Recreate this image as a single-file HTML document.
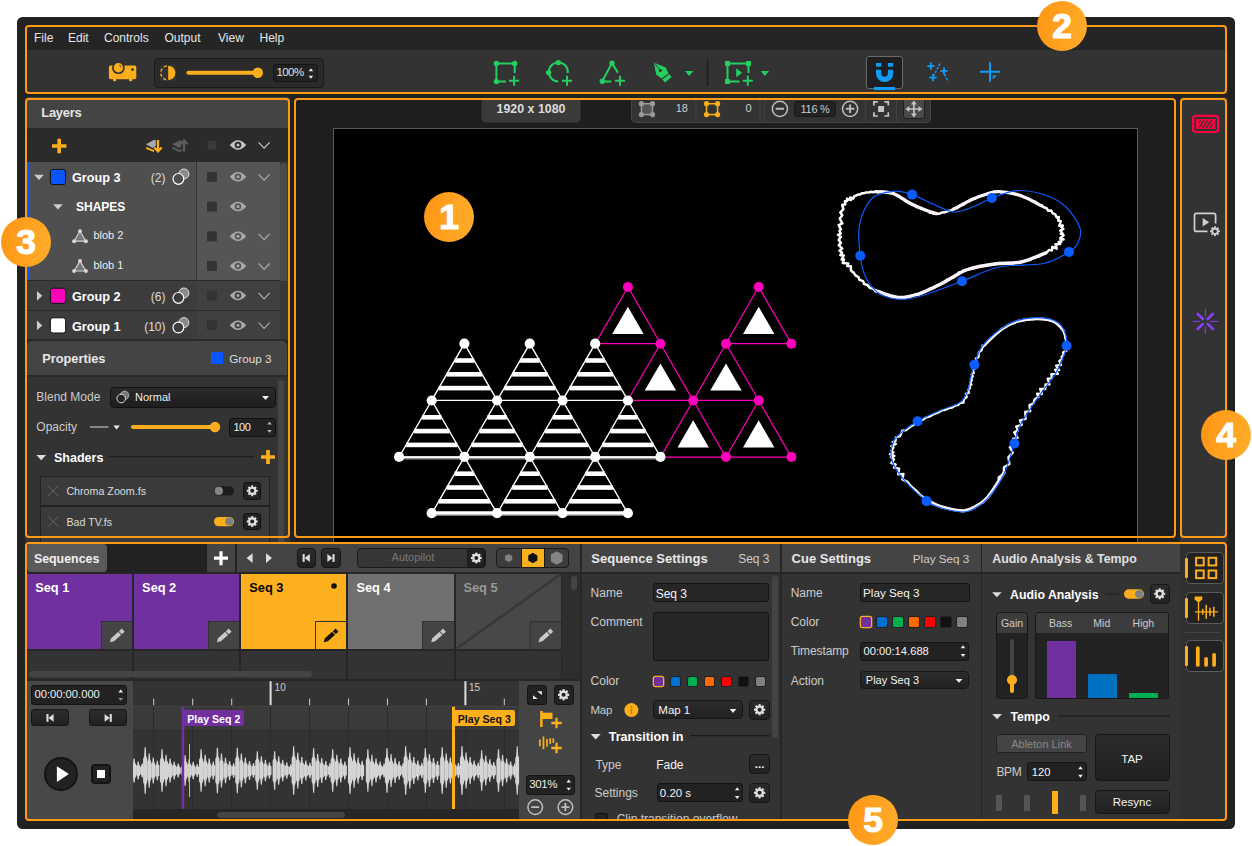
<!DOCTYPE html>
<html><head><meta charset="utf-8"><title>UI</title>
<style>
*{box-sizing:border-box;margin:0;padding:0}
html,body{width:1252px;height:846px;background:#fff;overflow:hidden}
body{position:relative;font-family:"Liberation Sans",sans-serif;font-size:12px;color:#ddd}
.a{position:absolute}
.win{left:17px;top:17px;width:1218px;height:811.6px;background:#222;border-radius:5.5px}
.ob{border:2.1px solid #fa9a16;border-radius:4px}
.badge{width:50px;height:50px;border-radius:50%;background:linear-gradient(100deg,#ff9614,#ffad2c);color:#fff;font-weight:bold;font-size:35.5px;text-align:center;line-height:50.5px;-webkit-text-stroke:1.1px #fff}
.t{white-space:nowrap;line-height:1}
.clip{overflow:hidden}
svg{overflow:visible;pointer-events:none}
</style></head><body>
<div class="a win"></div>
<div class="a clip" style="left:25px;top:25px;width:1203px;height:69px;border-radius:5px">
<div class="a" style="left:0;top:0;width:1203px;height:25px;background:#252525"></div>
<div class="a" style="left:0;top:25px;width:1203px;height:44px;background:#333"></div>
</div>
<div class="a t" style="top:32.14px;font-size:12px;color:#e6e6e6;left:34px;">File</div>
<div class="a t" style="top:32.14px;font-size:12px;color:#e6e6e6;left:68px;">Edit</div>
<div class="a t" style="top:32.14px;font-size:12px;color:#e6e6e6;left:104px;">Controls</div>
<div class="a t" style="top:32.14px;font-size:12px;color:#e6e6e6;left:164.5px;">Output</div>
<div class="a t" style="top:32.14px;font-size:12px;color:#e6e6e6;left:218px;">View</div>
<div class="a t" style="top:32.14px;font-size:12px;color:#e6e6e6;left:259.5px;">Help</div>
<div class="a " style="left:154px;top:58px;width:170px;height:30px;background:#2b2b2b;border:1px solid #1a1a1a;border-radius:4px;"></div>
<div class="a " style="left:160px;top:65px;width:16px;height:16px;background:#333;border-radius:2px;"></div>
<div class="a " style="left:273px;top:64px;width:45px;height:18px;background:#222;border:1px solid #151515;border-radius:3px;"></div>
<div class="a t" style="top:67.07px;font-size:11.5px;color:#e0e0e0;letter-spacing:-0.6px;left:276.5px;">100%</div>
<div class="a " style="left:866px;top:56px;width:37px;height:33px;background:#1f1f1f;border:1px solid #6a6a6a;border-radius:3px;"></div>
<div class="a " style="left:874px;top:87px;width:21px;height:3px;background:#129cf6;"></div>
<svg class="a" style="left:0;top:0" width="1252" height="846" viewBox="0 0 1252 846"><g fill="#fcae1b"><rect x="108.9" y="65.5" width="27.4" height="13.8" rx="1.8"/><rect x="113.1" y="78.5" width="3" height="2.6"/><rect x="129.1" y="78.5" width="3" height="2.6"/><circle cx="118.4" cy="67.7" r="6.4" fill="#333"/><circle cx="118.4" cy="67.7" r="4.7"/><path d="M119.7 65.2L121 66.8" stroke="#333" stroke-width="0.9" stroke-linecap="round"/><circle cx="132.5" cy="69.6" r="1.4" fill="#333"/></g><path d="M168.2 65.7A7.2 7.2 0 0 1 168.2 80.1Z" fill="#fcae1b"/><path d="M166.8 65.8A7.2 7.2 0 0 0 166.8 80" fill="none" stroke="#fcae1b" stroke-width="1.3" stroke-dasharray="3.2 2.1"/><rect x="186.4" y="70.8" width="75" height="4" rx="2" fill="#fcae1b"/><circle cx="257.8" cy="72.8" r="5.2" fill="#fcae1b"/><path d="M308.6 71.2L310.9 68.2L313.2 71.2ZM308.6 75.8L310.9 78.8L313.2 75.8Z" fill="#e8e8e8"/><g stroke="#24cf60" stroke-width="2" fill="none"><path d="M514.7 73V63.4H496.4V81.6H506"/></g><g fill="#24cf60"><circle cx="496.4" cy="63.4" r="2.7"/><circle cx="514.7" cy="63.4" r="2.7"/><circle cx="496.4" cy="81.6" r="2.7"/></g><path d="M509.1 80.7H519.1M514.1 75.7V85.7" stroke="#24cf60" stroke-width="2" fill="none"/><path d="M567.8 73A9.5 9.5 0 1 0 558.3 81.4" stroke="#24cf60" stroke-width="2" fill="none"/><circle cx="558.3" cy="62.6" r="2.7" fill="#24cf60"/><circle cx="548.6" cy="72.6" r="2.7" fill="#24cf60"/><path d="M562 80.7H572M567 75.7V85.7" stroke="#24cf60" stroke-width="2" fill="none"/><path d="M618 72.7L612 63.1L602.1 81.4H611.3" stroke="#24cf60" stroke-width="2" fill="none"/><circle cx="612" cy="63.1" r="2.7" fill="#24cf60"/><circle cx="602.3" cy="81.3" r="2.7" fill="#24cf60"/><path d="M615 80.7H625M620 75.7V85.7" stroke="#24cf60" stroke-width="2" fill="none"/><path d="M653.8 62.4L665.6 67.4L668.6 73.4L661.4 78.6L656.2 74.4Z" fill="#24cf60"/><path d="M662.3 79.3L669.3 74.3L671.6 77L665 82.4Z" fill="#24cf60"/><circle cx="660.4" cy="70.6" r="1.5" fill="#333"/><path d="M654.5 63L660 70" stroke="#333" stroke-width="0.9"/><path d="M685 71H693.4L689.2 76Z" fill="#24cf60"/><rect x="706.8" y="60" width="1.5" height="26" fill="#1c1c1c"/><path d="M748.5 73V63.5H727.5V81.5H739.5" stroke="#24cf60" stroke-width="2" fill="none"/><g fill="#24cf60"><rect x="725" y="61" width="5" height="5"/><rect x="746" y="61" width="5" height="5"/><rect x="725" y="79" width="5" height="5"/><path d="M736.2 68.2L742.2 72.7L736.2 77.2Z"/></g><path d="M742.8 80.7H752.8M747.8 75.7V85.7" stroke="#24cf60" stroke-width="2" fill="none"/><path d="M760.7 71H769L764.85 76Z" fill="#24cf60"/><path d="M878.6 69.7V73.3A6 6 0 0 0 890.6 73.3V69.7" stroke="#129cf6" stroke-width="5.3" fill="none"/><rect x="876" y="63" width="5.3" height="3.7" fill="#129cf6"/><rect x="887.9" y="63" width="5.3" height="3.7" fill="#129cf6"/><path d="M927.3 66.1H934.5M930.9 62.49999999999999V69.69999999999999" stroke="#129cf6" stroke-width="1.8" fill="none"/><path d="M940.4 70.8H947.6M944 67.2V74.39999999999999" stroke="#129cf6" stroke-width="1.8" fill="none"/><path d="M929.4 77.7H936.6M933 74.10000000000001V81.3" stroke="#129cf6" stroke-width="1.8" fill="none"/><path d="M940 63.6L933.6 76" stroke="#129cf6" stroke-width="1.4" stroke-dasharray="2.5 1.5"/><path d="M942.8 70.5L948 81.7" stroke="#129cf6" stroke-width="1.4" stroke-dasharray="2.5 1.5"/><path d="M990 62.2V81.7M980 71.8H1000" stroke="#129cf6" stroke-width="2"/><path d="M992.7 75.4H997L992.7 79.3Z" fill="#129cf6"/></svg>
<div class="a clip" style="left:25px;top:96.5px;width:265px;height:445.5px;border-radius:4px 4px 0 0;background:#2a2a2a">
<div class="a" style="left:0px;top:0.0px;width:265px;height:31.5px;background:#444;"></div>
<div class="a" style="left:0px;top:33.5px;width:265px;height:31.5px;background:#2b2b2b;"></div>
<div class="a" style="left:2px;top:65.0px;width:169.5px;height:118.5px;background:#4f4f4f;"></div>
<div class="a" style="left:172px;top:65.0px;width:82.5px;height:118.5px;background:#555;"></div>
<div class="a" style="left:2px;top:65.0px;width:2px;height:118.5px;background:#0a5cff;"></div>
<div class="a" style="left:171px;top:65.0px;width:1px;height:177.3px;background:#333;"></div>
<div class="a" style="left:2px;top:184.8px;width:169.5px;height:28.4px;background:#3c3c3c;"></div>
<div class="a" style="left:172px;top:184.8px;width:82.5px;height:28.4px;background:#404040;"></div>
<div class="a" style="left:2px;top:214.5px;width:169.5px;height:27.8px;background:#3c3c3c;"></div>
<div class="a" style="left:172px;top:214.5px;width:82.5px;height:27.8px;background:#404040;"></div>
<div class="a" style="left:254.5px;top:65.0px;width:8px;height:177px;background:#383838;"></div>
<div class="a" style="left:254.5px;top:66.5px;width:7.5px;height:118px;background:#4a4a4a;border-radius:3px 3px 0 0;"></div>
<div class="a" style="left:2px;top:244.5px;width:259.5px;height:34px;background:#444;border-radius:5px 5px 0 0;"></div>
<div class="a" style="left:0px;top:280.0px;width:265px;height:166px;background:#333;"></div>
<div class="a" style="left:253.3px;top:283.5px;width:6px;height:166px;background:#454545;border-radius:3px;"></div>
<div class="a" style="left:85px;top:290.5px;width:166px;height:20.5px;background:linear-gradient(#2a2a2a,#1e1e1e);border:1px solid #111;border-radius:4px;"></div>
<div class="a" style="left:204px;top:321.0px;width:47px;height:19.5px;background:#222;border:1px solid #111;border-radius:3px;"></div>
<div class="a" style="left:15px;top:379.0px;width:229.5px;height:30.5px;background:#3a3a3a;border:1px solid #212121;"></div>
<div class="a" style="left:15px;top:409.0px;width:229.5px;height:31px;background:#3a3a3a;border:1px solid #212121;"></div>
<div class="a" style="left:15px;top:440.0px;width:229.5px;height:10px;background:#3a3a3a;border:1px solid #212121;"></div>
<div class="a" style="left:218px;top:385.5px;width:18px;height:17.8px;background:#222;border:1px solid #111;border-radius:3px;"></div>
<div class="a" style="left:218px;top:416.0px;width:18px;height:17.8px;background:#222;border:1px solid #111;border-radius:3px;"></div>
</div>
<div class="a t" style="top:106.20px;font-size:13px;color:#e4e4e4;font-weight:bold;letter-spacing:-0.3px;left:41.3px;">Layers</div>
<div class="a t" style="top:171.95px;font-size:12.7px;color:#fff;font-weight:bold;left:72px;">Group 3</div>
<div class="a t" style="top:172.14px;font-size:12px;color:#ddd;left:-134.5px;width:300px;text-align:right;">(2)</div>
<div class="a t" style="top:201.34px;font-size:12px;color:#fff;font-weight:bold;left:76px;">SHAPES</div>
<div class="a t" style="top:230.49px;font-size:11px;color:#eee;left:93.4px;">blob 2</div>
<div class="a t" style="top:260.29px;font-size:11px;color:#eee;left:93.4px;">blob 1</div>
<div class="a t" style="top:290.85px;font-size:12.7px;color:#fff;font-weight:bold;left:72px;">Group 2</div>
<div class="a t" style="top:291.04px;font-size:12px;color:#ddd;left:-134.5px;width:300px;text-align:right;">(6)</div>
<div class="a t" style="top:320.55px;font-size:12.7px;color:#fff;font-weight:bold;left:72px;">Group 1</div>
<div class="a t" style="top:320.84px;font-size:12px;color:#ddd;left:-134.5px;width:300px;text-align:right;">(10)</div>
<div class="a t" style="top:352.66px;font-size:12.8px;color:#e8e8e8;font-weight:bold;left:42.2px;">Properties</div>
<div class="a t" style="top:352.80px;font-size:11.7px;color:#ddd;left:229.2px;">Group 3</div>
<div class="a t" style="top:391.14px;font-size:12px;color:#ccc;left:36.3px;">Blend Mode</div>
<div class="a t" style="top:392.19px;font-size:11px;color:#eee;left:135px;">Normal</div>
<div class="a t" style="top:421.24px;font-size:12px;color:#ccc;left:36.3px;">Opacity</div>
<div class="a t" style="top:421.89px;font-size:11px;color:#eee;letter-spacing:-0.5px;left:233.5px;">100</div>
<div class="a t" style="top:452.02px;font-size:12.5px;color:#fff;font-weight:bold;left:54px;">Shaders</div>
<div class="a t" style="top:486.14px;font-size:10.7px;color:#ddd;left:66.4px;">Chroma Zoom.fs</div>
<div class="a t" style="top:517.14px;font-size:10.7px;color:#ddd;left:66.4px;">Bad TV.fs</div>
<svg class="a" style="left:0;top:0" width="1252" height="846" viewBox="0 0 1252 846"><path d="M52 146H66.4M59.2 138.8V153.2" stroke="#fcae1b" stroke-width="3.6"/><path d="M146 144.3L153.9 140H155.8V145.7L152.7 147.9Z" fill="#aaa"/><path d="M146.2 147.8L154 151.1" stroke="#fcae1b" stroke-width="2"/><path d="M158 140V151M154.3 147.5L158 151.4L161.7 147.5" stroke="#fcae1b" stroke-width="2.3" fill="none"/><path d="M172.1 144.3L179.8 140.2H181V146.9L179.3 147.9Z" fill="#5c5c5c"/><path d="M172.3 147.5L179.3 151L181.8 149.7" stroke="#5c5c5c" stroke-width="1.8" fill="none"/><path d="M184 151.7V141M180.4 144.2L184 140.4L187.6 144.2" stroke="#5c5c5c" stroke-width="2.3" fill="none"/><rect x="207.7" y="141" width="8.5" height="8.5" fill="#3a3a3a"/><path d="M229.8 145Q238 135.4 246.2 145Q238 154.6 229.8 145Z" fill="#c6c6c6"/><circle cx="238" cy="145" r="3.3" fill="#2b2b2b"/><circle cx="238" cy="145" r="1.5" fill="#c6c6c6"/><path d="M258.6 142.29999999999998L264.1 148.1L269.6 142.29999999999998" stroke="#c6c6c6" stroke-width="1.2" fill="none"/><rect x="207" y="171.9" width="9.9" height="9.9" fill="#333"/><path d="M229.8 176.8Q238 167.20000000000002 246.2 176.8Q238 186.4 229.8 176.8Z" fill="#aaa"/><circle cx="238" cy="176.8" r="3.3" fill="#555"/><circle cx="238" cy="176.8" r="1.5" fill="#aaa"/><path d="M258.6 174.3L264.1 180.10000000000002L269.6 174.3" stroke="#aaa" stroke-width="1.2" fill="none"/><rect x="207" y="201.6" width="9.9" height="9.9" fill="#333"/><path d="M229.8 206.5Q238 196.9 246.2 206.5Q238 216.1 229.8 206.5Z" fill="#aaa"/><circle cx="238" cy="206.5" r="3.3" fill="#555"/><circle cx="238" cy="206.5" r="1.5" fill="#aaa"/><rect x="207" y="231.4" width="9.9" height="9.9" fill="#333"/><path d="M229.8 236.3Q238 226.70000000000002 246.2 236.3Q238 245.9 229.8 236.3Z" fill="#aaa"/><circle cx="238" cy="236.3" r="3.3" fill="#555"/><circle cx="238" cy="236.3" r="1.5" fill="#aaa"/><path d="M258.6 233.8L264.1 239.60000000000002L269.6 233.8" stroke="#aaa" stroke-width="1.2" fill="none"/><rect x="207" y="261.1" width="9.9" height="9.9" fill="#333"/><path d="M229.8 266Q238 256.4 246.2 266Q238 275.6 229.8 266Z" fill="#aaa"/><circle cx="238" cy="266" r="3.3" fill="#555"/><circle cx="238" cy="266" r="1.5" fill="#aaa"/><path d="M258.6 263.5L264.1 269.29999999999995L269.6 263.5" stroke="#aaa" stroke-width="1.2" fill="none"/><rect x="207" y="290.6" width="9.9" height="9.9" fill="#333"/><path d="M229.8 295.5Q238 285.9 246.2 295.5Q238 305.1 229.8 295.5Z" fill="#aaa"/><circle cx="238" cy="295.5" r="3.3" fill="#404040"/><circle cx="238" cy="295.5" r="1.5" fill="#aaa"/><path d="M258.6 293.0L264.1 298.79999999999995L269.6 293.0" stroke="#aaa" stroke-width="1.2" fill="none"/><rect x="207" y="320.3" width="9.9" height="9.9" fill="#333"/><path d="M229.8 325.2Q238 315.59999999999997 246.2 325.2Q238 334.8 229.8 325.2Z" fill="#aaa"/><circle cx="238" cy="325.2" r="3.3" fill="#404040"/><circle cx="238" cy="325.2" r="1.5" fill="#aaa"/><path d="M258.6 322.7L264.1 328.49999999999994L269.6 322.7" stroke="#aaa" stroke-width="1.2" fill="none"/><path d="M34.1 174.8H43.9L39 180.0Z" fill="#ccc"/><rect x="50.4" y="169.4" width="15.2" height="15.2" rx="2.5" fill="#0a55ff" stroke="#111" stroke-width="1"/><circle cx="183.9" cy="174.0" r="5" fill="#8a8a8a" stroke="#ddd" stroke-width="1"/><circle cx="178.4" cy="178.9" r="5.4" fill="#4f4f4f" stroke="#fff" stroke-width="1.2"/><path d="M53.1 204.3H62.9L58 209.5Z" fill="#ccc"/><path d="M80 231.3L74.1 241.20000000000002H85.9Z" fill="#777" stroke="#d0d0d0" stroke-width="1.2"/><g fill="#d8d8d8"><circle cx="80" cy="231.3" r="2"/><circle cx="74.1" cy="241.20000000000002" r="2"/><circle cx="85.9" cy="241.20000000000002" r="2"/></g><path d="M80 261.1L74.1 271.0H85.9Z" fill="#777" stroke="#d0d0d0" stroke-width="1.2"/><g fill="#d8d8d8"><circle cx="80" cy="261.1" r="2"/><circle cx="74.1" cy="271.0" r="2"/><circle cx="85.9" cy="271.0" r="2"/></g><path d="M36.95 290.90000000000003V300.7L42.25 295.8Z" fill="#ccc"/><rect x="50.4" y="288.2" width="15.2" height="15.2" rx="2.5" fill="#ff00bb" stroke="#111" stroke-width="1"/><circle cx="183.9" cy="293.0" r="5" fill="#8a8a8a" stroke="#ddd" stroke-width="1"/><circle cx="178.4" cy="297.90000000000003" r="5.4" fill="#3c3c3c" stroke="#fff" stroke-width="1.2"/><path d="M36.95 320.5V330.29999999999995L42.25 325.4Z" fill="#ccc"/><rect x="50.4" y="317.8" width="15.2" height="15.2" rx="2.5" fill="#ffffff" stroke="#111" stroke-width="1"/><circle cx="183.9" cy="322.59999999999997" r="5" fill="#8a8a8a" stroke="#ddd" stroke-width="1"/><circle cx="178.4" cy="327.5" r="5.4" fill="#3c3c3c" stroke="#fff" stroke-width="1.2"/><rect x="211" y="352.2" width="12" height="11.8" fill="#0a55ff"/><circle cx="124.6" cy="395.3" r="4.2" fill="#777" stroke="#bbb" stroke-width="0.8"/><circle cx="121.2" cy="398.5" r="4.3" fill="#262626" stroke="#ddd" stroke-width="1"/><path d="M261.9 395.9H269.1L265.5 400.1Z" fill="#eee"/><path d="M90 427H108.5" stroke="#ddd" stroke-width="1"/><path d="M113.39999999999999 425.6H119.8L116.6 429.4Z" fill="#eee"/><rect x="131" y="425" width="88" height="4" rx="2" fill="#fcae1b"/><circle cx="215" cy="427" r="5.2" fill="#fcae1b"/><path d="M267.2 424.6L269.5 421.8L271.8 424.6ZM267.2 430L269.5 432.8L271.8 430Z" fill="#bbb"/><path d="M36.300000000000004 455.0H46.1L41.2 460.20000000000005Z" fill="#ddd"/><path d="M109 456.7H254" stroke="#1e1e1e" stroke-width="1.2"/><path d="M261 457H275M268 450V464" stroke="#fcae1b" stroke-width="3.7"/><path d="M48 485.6L58.4 496.0M58.4 485.6L48 496.0" stroke="#666" stroke-width="1"/><g transform="translate(252.2 490.8)"><circle r="3.06" fill="none" stroke="#e0e0e0" stroke-width="2.14"/><rect x="-1.07" y="-5.40" width="2.14" height="2.04" fill="#e0e0e0" transform="rotate(0)"/><rect x="-1.07" y="-5.40" width="2.14" height="2.04" fill="#e0e0e0" transform="rotate(45)"/><rect x="-1.07" y="-5.40" width="2.14" height="2.04" fill="#e0e0e0" transform="rotate(90)"/><rect x="-1.07" y="-5.40" width="2.14" height="2.04" fill="#e0e0e0" transform="rotate(135)"/><rect x="-1.07" y="-5.40" width="2.14" height="2.04" fill="#e0e0e0" transform="rotate(180)"/><rect x="-1.07" y="-5.40" width="2.14" height="2.04" fill="#e0e0e0" transform="rotate(225)"/><rect x="-1.07" y="-5.40" width="2.14" height="2.04" fill="#e0e0e0" transform="rotate(270)"/><rect x="-1.07" y="-5.40" width="2.14" height="2.04" fill="#e0e0e0" transform="rotate(315)"/></g><path d="M48 516.3L58.4 526.7M58.4 516.3L48 526.7" stroke="#666" stroke-width="1"/><g transform="translate(252.2 521.5)"><circle r="3.06" fill="none" stroke="#e0e0e0" stroke-width="2.14"/><rect x="-1.07" y="-5.40" width="2.14" height="2.04" fill="#e0e0e0" transform="rotate(0)"/><rect x="-1.07" y="-5.40" width="2.14" height="2.04" fill="#e0e0e0" transform="rotate(45)"/><rect x="-1.07" y="-5.40" width="2.14" height="2.04" fill="#e0e0e0" transform="rotate(90)"/><rect x="-1.07" y="-5.40" width="2.14" height="2.04" fill="#e0e0e0" transform="rotate(135)"/><rect x="-1.07" y="-5.40" width="2.14" height="2.04" fill="#e0e0e0" transform="rotate(180)"/><rect x="-1.07" y="-5.40" width="2.14" height="2.04" fill="#e0e0e0" transform="rotate(225)"/><rect x="-1.07" y="-5.40" width="2.14" height="2.04" fill="#e0e0e0" transform="rotate(270)"/><rect x="-1.07" y="-5.40" width="2.14" height="2.04" fill="#e0e0e0" transform="rotate(315)"/></g><rect x="214" y="486.2" width="20" height="9.4" rx="4.7" fill="#1c1c1c"/><circle cx="218.8" cy="490.9" r="4.1" fill="#858585"/><rect x="214" y="516.9" width="20" height="9.4" rx="4.7" fill="#fcae1b"/><circle cx="229.2" cy="521.6" r="4.1" fill="#808080"/></svg>
<div class="a clip" style="left:294px;top:98px;width:883px;height:444px;border-radius:4px 4px 0 0;background:#1e1e1e">
<div class="a" style="left:38.5px;top:29.5px;width:805px;height:430px;background:#000;border:1.2px solid #5a5a5a"></div>
<div class="a" style="left:187px;top:0;width:100px;height:24.5px;background:#3a3a3a;border:1px solid #2c2c2c;border-top:none;border-radius:0 0 5px 5px"></div>
<div class="a" style="left:337px;top:0;width:299.5px;height:24.5px;background:#333;border:1px solid #444;border-top:none;border-radius:0 0 5px 5px"></div>
<div class="a" style="left:500.2px;top:2.7px;width:41.5px;height:16.8px;background:#222;border:1px solid #1a1a1a;border-radius:3px"></div>
<div class="a" style="left:609.2px;top:0;width:21.4px;height:21.4px;background:#4a4a4a;border:1px solid #1e1e1e;border-radius:0 0 3px 3px"></div>
</div>
<div class="a t" style="top:103.30px;font-size:12.4px;color:#ddd;font-weight:bold;left:381px;width:300px;text-align:center;">1920 x 1080</div>
<div class="a t" style="top:103.29px;font-size:11px;color:#ccc;left:388px;width:300px;text-align:right;">18</div>
<div class="a t" style="top:103.29px;font-size:11px;color:#ccc;left:451.70000000000005px;width:300px;text-align:right;">0</div>
<div class="a t" style="top:103.99px;font-size:11px;color:#ccc;letter-spacing:-0.3px;left:665px;width:300px;text-align:center;">116 %</div>
<svg class="a" style="left:0;top:0" width="1252" height="846" viewBox="0 0 1252 846"><defs><clipPath id="cv"><rect x="296" y="100" width="879" height="442"/></clipPath></defs><g clip-path="url(#cv)"><path d="M464.4 343.7L431.7 400.4H497.1Z" fill="none" stroke="#fff" stroke-width="1.4"/><rect x="454.7" y="358.2" width="19.4" height="4.6" fill="#fff"/><rect x="446.8" y="372.0" width="35.3" height="4.6" fill="#fff"/><rect x="438.8" y="385.8" width="51.2" height="4.6" fill="#fff"/><path d="M529.8 343.7L497.1 400.4H562.5Z" fill="none" stroke="#fff" stroke-width="1.4"/><rect x="520.1" y="358.2" width="19.4" height="4.6" fill="#fff"/><rect x="512.2" y="372.0" width="35.3" height="4.6" fill="#fff"/><rect x="504.2" y="385.8" width="51.2" height="4.6" fill="#fff"/><path d="M595.2 343.7L562.5 400.4H627.9Z" fill="none" stroke="#fff" stroke-width="1.4"/><rect x="585.5" y="358.2" width="19.4" height="4.6" fill="#fff"/><rect x="577.6" y="372.0" width="35.3" height="4.6" fill="#fff"/><rect x="569.6" y="385.8" width="51.2" height="4.6" fill="#fff"/><path d="M431.7 400.5L399.0 457.2H464.4Z" fill="none" stroke="#fff" stroke-width="1.4"/><rect x="422.0" y="415.0" width="19.4" height="4.6" fill="#fff"/><rect x="414.1" y="428.8" width="35.3" height="4.6" fill="#fff"/><rect x="406.1" y="442.6" width="51.2" height="4.6" fill="#fff"/><path d="M497.1 400.5L464.4 457.2H529.8Z" fill="none" stroke="#fff" stroke-width="1.4"/><rect x="487.4" y="415.0" width="19.4" height="4.6" fill="#fff"/><rect x="479.5" y="428.8" width="35.3" height="4.6" fill="#fff"/><rect x="471.5" y="442.6" width="51.2" height="4.6" fill="#fff"/><path d="M562.5 400.5L529.8 457.2H595.2Z" fill="none" stroke="#fff" stroke-width="1.4"/><rect x="552.8" y="415.0" width="19.4" height="4.6" fill="#fff"/><rect x="544.9" y="428.8" width="35.3" height="4.6" fill="#fff"/><rect x="536.9" y="442.6" width="51.2" height="4.6" fill="#fff"/><path d="M627.9 400.5L595.2 457.2H660.6Z" fill="none" stroke="#fff" stroke-width="1.4"/><rect x="618.2" y="415.0" width="19.4" height="4.6" fill="#fff"/><rect x="610.3" y="428.8" width="35.3" height="4.6" fill="#fff"/><rect x="602.3" y="442.6" width="51.2" height="4.6" fill="#fff"/><path d="M464.4 456.9L431.7 513.6H497.1Z" fill="none" stroke="#fff" stroke-width="1.4"/><rect x="454.7" y="471.4" width="19.4" height="4.6" fill="#fff"/><rect x="446.8" y="485.2" width="35.3" height="4.6" fill="#fff"/><rect x="438.8" y="499.0" width="51.2" height="4.6" fill="#fff"/><path d="M529.8 456.9L497.1 513.6H562.5Z" fill="none" stroke="#fff" stroke-width="1.4"/><rect x="520.1" y="471.4" width="19.4" height="4.6" fill="#fff"/><rect x="512.2" y="485.2" width="35.3" height="4.6" fill="#fff"/><rect x="504.2" y="499.0" width="51.2" height="4.6" fill="#fff"/><path d="M595.2 456.9L562.5 513.6H627.9Z" fill="none" stroke="#fff" stroke-width="1.4"/><rect x="585.5" y="471.4" width="19.4" height="4.6" fill="#fff"/><rect x="577.6" y="485.2" width="35.3" height="4.6" fill="#fff"/><rect x="569.6" y="499.0" width="51.2" height="4.6" fill="#fff"/><path d="M399.1 457.4H660.4" stroke="#fff" stroke-width="2.4"/><path d="M399.1 459H660.4" stroke="#999" stroke-width="1"/><path d="M431.7 513H627.9" stroke="#fff" stroke-width="3.4"/><path d="M431.7 515.2H627.9" stroke="#aaa" stroke-width="1"/><path d="M627.9 287L595.2 343.7H660.6Z" fill="none" stroke="#ff00bb" stroke-width="1.2"/><path d="M627.9 306.7L612.2 333.9H643.6Z" fill="#fff"/><path d="M758.7 287L726.0 343.7H791.4Z" fill="none" stroke="#ff00bb" stroke-width="1.2"/><path d="M758.7 306.7L743.0 333.9H774.4Z" fill="#fff"/><path d="M660.4 343.7L627.7 400.4H693.1Z" fill="none" stroke="#ff00bb" stroke-width="1.2"/><path d="M660.4 363.4L644.7 390.6H676.1Z" fill="#fff"/><path d="M726 343.7L693.3 400.4H758.7Z" fill="none" stroke="#ff00bb" stroke-width="1.2"/><path d="M726 363.4L710.3 390.6H741.7Z" fill="#fff"/><path d="M693.2 400.5L660.5 457.2H725.9Z" fill="none" stroke="#ff00bb" stroke-width="1.2"/><path d="M693.2 420.2L677.5 447.4H708.9Z" fill="#fff"/><path d="M758.7 400.5L726.0 457.2H791.4Z" fill="none" stroke="#ff00bb" stroke-width="1.2"/><path d="M758.7 420.2L743.0 447.4H774.4Z" fill="#fff"/><circle cx="627.9" cy="287" r="5" fill="#ff00bb"/><circle cx="758.7" cy="287" r="5" fill="#ff00bb"/><circle cx="660.4" cy="343.7" r="5" fill="#ff00bb"/><circle cx="726" cy="343.7" r="5" fill="#ff00bb"/><circle cx="791.4" cy="343.7" r="5" fill="#ff00bb"/><circle cx="693.2" cy="400.5" r="5" fill="#ff00bb"/><circle cx="758.7" cy="400.5" r="5" fill="#ff00bb"/><circle cx="726" cy="456.9" r="5" fill="#ff00bb"/><circle cx="791.4" cy="456.9" r="5" fill="#ff00bb"/><circle cx="464.4" cy="343.7" r="5.1" fill="#fff"/><circle cx="529.8" cy="343.7" r="5.1" fill="#fff"/><circle cx="595.2" cy="343.7" r="5.1" fill="#fff"/><circle cx="431.7" cy="400.5" r="5.1" fill="#fff"/><circle cx="497.1" cy="400.5" r="5.1" fill="#fff"/><circle cx="562.5" cy="400.5" r="5.1" fill="#fff"/><circle cx="627.9" cy="400.5" r="5.1" fill="#fff"/><circle cx="399.1" cy="456.9" r="5.1" fill="#fff"/><circle cx="464.4" cy="456.9" r="5.1" fill="#fff"/><circle cx="529.8" cy="456.9" r="5.1" fill="#fff"/><circle cx="595.2" cy="456.9" r="5.1" fill="#fff"/><circle cx="660.4" cy="456.9" r="5.1" fill="#fff"/><circle cx="431.7" cy="513.2" r="5.1" fill="#fff"/><circle cx="497.1" cy="513.2" r="5.1" fill="#fff"/><circle cx="562.5" cy="513.2" r="5.1" fill="#fff"/><circle cx="627.9" cy="513.2" r="5.1" fill="#fff"/><path d="M875.8 191.5L878.5 192.1L881.4 191.4L884.3 192.0L887.2 192.1L890.0 192.8L893.2 193.3L895.6 194.7L899.0 196.0L901.2 198.2L904.3 199.2L906.6 201.8L909.4 202.8L912.1 204.5L914.7 205.4L916.8 206.9L919.3 207.3L921.6 208.6L924.1 209.2L926.1 210.6L928.1 211.1L929.9 212.7L932.0 212.8L934.1 213.8L936.2 213.2L938.8 213.9L941.8 212.6L944.8 212.3L947.9 211.1L951.1 210.5L953.8 208.6L957.2 208.0L959.9 205.8L963.6 204.6L966.1 202.3L969.3 201.0L972.1 199.1L974.8 198.7L977.3 197.0L979.9 196.4L982.1 195.4L984.9 194.7L986.9 193.9L989.3 193.5L990.8 192.7L992.8 192.5L994.5 191.4L996.4 191.9L999.2 191.5L1001.9 192.4L1005.5 192.2L1009.4 193.1L1013.4 193.3L1017.2 194.7L1021.1 195.5L1024.5 197.5L1028.4 198.4L1031.4 200.7L1035.6 201.9L1038.4 204.6L1041.6 205.6L1044.2 207.5L1046.4 208.0L1048.2 210.7L1051.2 210.5L1052.5 213.2L1055.2 214.4L1056.7 217.5L1058.9 217.1L1058.2 220.6L1060.8 221.2L1059.3 225.8L1062.8 225.6L1061.4 227.2L1063.3 229.0L1060.3 230.6L1062.7 233.7L1060.8 233.7L1063.6 235.3L1060.3 238.1L1063.6 239.5L1060.6 239.5L1061.3 241.9L1058.6 242.0L1060.1 244.1L1055.5 244.3L1056.7 248.7L1052.3 246.8L1052.0 250.5L1049.2 249.9L1046.1 252.8L1042.4 254.3L1038.8 256.6L1034.0 257.5L1030.1 259.9L1025.5 260.7L1021.2 262.1L1016.5 262.4L1012.3 263.5L1007.7 262.9L1003.4 263.5L998.8 263.1L994.6 264.4L989.7 264.6L985.0 265.7L980.3 265.9L975.5 267.7L971.4 268.0L967.8 269.6L964.1 270.3L961.7 272.1L958.8 272.5L957.4 274.8L955.4 275.4L953.3 277.8L950.4 277.9L949.1 279.8L947.2 279.6L945.8 281.7L943.2 282.4L941.0 284.3L937.2 285.5L934.2 287.7L929.6 288.8L925.9 291.6L921.9 292.2L918.9 294.4L915.1 294.6L911.4 296.2L908.3 296.5L905.1 298.0L901.7 297.2L898.0 298.0L894.6 296.8L890.9 296.5L887.1 294.4L882.7 294.2L879.7 291.5L875.7 291.3L873.0 288.7L869.8 287.9L867.4 285.0L864.1 284.0L863.1 281.1L859.4 279.8L858.5 277.1L855.4 275.3L853.7 272.8L850.9 270.5L850.9 266.3L847.2 266.1L848.3 263.4L842.7 263.1L844.0 259.4L841.6 259.5L843.9 255.5L840.3 255.3L842.1 252.8L839.5 250.6L842.3 248.6L838.8 245.1L840.9 242.8L838.7 240.0L840.9 236.8L838.0 234.8L840.7 233.7L839.5 230.6L840.9 229.4L838.7 225.2L842.3 223.4L839.7 218.5L842.3 215.3L840.3 212.6L843.4 209.1L842.2 204.9L845.3 204.3L844.9 201.3L847.2 201.0L847.0 198.8L851.1 200.0L850.2 197.5L853.3 198.6L854.4 196.1L856.2 195.5L858.0 194.5L860.0 194.5L861.8 193.3L863.9 193.3L866.1 192.4L868.7 192.6L871.0 191.8L873.3 192.2Z" fill="none" stroke="#fff" stroke-width="2.5" stroke-linejoin="round"/><path d="M876.0 191.7C878.8 192.0 887.4 191.6 893.0 193.5C898.6 195.4 904.3 200.3 909.5 203.0C914.7 205.7 919.5 207.7 924.0 209.5C928.5 211.3 934.2 212.9 936.3 213.6" fill="none" stroke="#fbf3fb" stroke-width="3.4" stroke-linecap="round"/><path d="M954.0 209.0C957.0 207.4 966.5 202.0 972.0 199.5C977.5 197.0 982.5 195.3 987.0 194.0C991.5 192.7 993.3 191.4 999.0 191.7C1004.7 192.0 1013.9 193.3 1021.0 195.7C1028.1 198.0 1038.1 204.1 1041.5 205.8" fill="none" stroke="#fbf3fb" stroke-width="3.2" stroke-linecap="round"/><path d="M1046.0 252.8C1041.8 254.3 1029.6 260.1 1021.0 262.0C1012.4 263.9 1003.4 262.8 994.5 264.0C985.6 265.2 974.5 267.3 967.6 269.5C960.7 271.7 957.5 274.6 953.0 277.0C948.5 279.4 946.6 281.2 940.8 284.0C935.0 286.8 925.5 291.8 918.4 294.0C911.3 296.2 905.4 298.0 898.3 297.5C891.2 297.0 879.7 291.9 876.0 290.8" fill="none" stroke="#fbf3fb" stroke-width="3.4" stroke-linecap="round"/><path d="M860.3 255.7C859.2 246.9 857.5 234.5 859.5 225.0C861.5 215.5 866.3 204.1 872.0 198.5C877.7 192.9 887.1 192.0 893.8 191.3C900.5 190.7 905.6 192.5 912.1 194.6C918.6 196.7 926.0 201.1 933.0 204.0C940.0 206.9 947.2 211.7 954.2 212.0C961.2 212.3 968.7 208.3 975.0 206.0C981.3 203.7 984.8 200.6 991.8 198.0C998.8 195.4 1007.9 191.1 1016.8 190.6C1025.7 190.1 1036.8 192.3 1045.0 195.0C1053.2 197.7 1060.2 201.5 1066.0 207.0C1071.8 212.5 1078.0 222.0 1080.0 228.0C1082.0 234.0 1079.8 239.0 1078.0 243.0C1076.2 247.0 1074.7 248.5 1069.0 251.9C1063.3 255.3 1055.4 261.0 1043.7 263.5C1032.0 266.0 1012.6 264.1 999.0 267.0C985.4 269.9 973.9 276.7 962.0 281.2C950.1 285.7 937.3 291.0 927.4 294.0C917.5 297.0 910.7 299.3 902.8 299.3C894.9 299.3 886.1 297.6 880.0 294.0C873.9 290.4 869.3 284.4 866.0 278.0C862.7 271.6 861.4 264.5 860.3 255.7Z" fill="none" stroke="#0a5cff" stroke-width="1.2"/><circle cx="912.1" cy="194.6" r="5" fill="#0a5cff"/><circle cx="991.8" cy="198" r="5" fill="#0a5cff"/><circle cx="1069" cy="251.9" r="5" fill="#0a5cff"/><circle cx="962" cy="281.2" r="5" fill="#0a5cff"/><circle cx="860.3" cy="255.7" r="5" fill="#0a5cff"/><path d="M1036.7 318.2L1039.9 318.9L1042.8 318.7L1045.9 319.6L1048.8 319.6L1051.2 320.8L1053.7 321.1L1055.5 322.4L1057.7 323.6L1059.1 325.1L1061.0 326.7L1061.8 328.7L1063.3 330.2L1063.9 332.6L1064.9 335.0L1065.2 337.9L1066.1 340.4L1065.6 343.3L1065.9 345.6L1065.3 347.9L1066.4 350.8L1063.1 352.4L1063.7 354.8L1061.6 356.9L1062.0 359.1L1059.3 361.0L1061.1 364.9L1056.1 365.6L1059.1 370.1L1055.1 369.7L1057.8 373.9L1051.4 374.2L1051.8 378.4L1047.6 378.6L1049.5 384.3L1045.5 384.5L1045.3 389.0L1040.1 388.9L1041.9 394.0L1037.0 393.7L1038.5 397.1L1034.7 399.2L1033.5 403.7L1029.4 405.2L1030.2 411.1L1025.2 411.8L1025.6 419.0L1019.9 420.3L1021.8 424.8L1016.2 426.5L1017.9 430.5L1014.2 432.3L1017.6 437.8L1013.1 438.8L1015.0 444.0L1009.8 447.2L1012.8 452.6L1008.3 457.4L1009.5 464.0L1003.9 467.3L1003.9 473.5L998.7 477.4L998.4 482.8L995.0 486.8L992.7 491.1L989.3 494.4L987.2 498.2L984.7 500.2L982.7 502.6L980.5 503.5L978.5 505.2L976.5 506.0L974.6 507.3L972.6 507.9L971.2 509.6L969.1 509.7L967.6 510.8L965.9 510.7L963.3 511.2L960.4 510.7L956.7 510.6L952.7 509.6L948.7 509.0L945.3 507.7L941.5 507.5L939.2 506.0L936.6 505.8L934.6 504.4L932.3 504.0L930.2 502.3L927.0 500.4L923.6 497.4L919.6 494.3L915.7 490.1L911.0 486.2L907.6 481.9L902.3 479.4L903.5 474.0L898.1 474.4L899.2 468.6L893.9 467.6L895.7 464.4L891.3 463.2L894.0 459.3L890.9 457.2L894.4 455.9L889.9 454.2L893.5 452.5L891.4 450.6L893.5 447.5L891.3 446.2L895.9 443.9L892.6 442.0L895.6 440.9L895.8 437.4L900.0 436.1L902.3 430.7L906.6 430.0L910.2 426.8L914.3 424.6L917.9 421.9L922.0 420.3L925.9 417.5L930.1 416.3L934.0 414.0L938.2 412.6L941.8 410.4L945.3 409.9L948.8 408.2L952.2 407.6L954.8 405.9L958.3 404.9L960.4 402.8L963.5 402.6L963.8 399.4L966.7 397.2L965.8 393.8L969.0 392.6L968.1 390.0L970.0 388.0L969.7 385.5L971.4 384.6L970.2 382.5L972.0 380.1L970.9 378.7L972.8 376.3L971.6 374.3L973.8 372.9L973.0 369.7L975.8 367.8L974.0 364.6L976.6 362.7L975.9 358.5L978.6 356.9L978.8 352.3L981.6 350.4L982.5 345.6L985.5 344.5L988.4 340.4L992.0 337.7L995.2 334.0L998.8 331.9L1001.5 328.9L1004.7 327.7L1007.3 325.5L1010.1 324.4L1012.2 323.0L1015.1 322.3L1017.9 320.9L1020.8 320.6L1024.2 319.6L1027.0 319.4L1030.4 318.8L1033.8 319.1Z" fill="none" stroke="#fff" stroke-width="2.3" stroke-linejoin="round"/><path d="M982.3 347.4C985.5 344.4 995.4 334.0 1001.3 329.7C1007.2 325.4 1011.7 323.4 1017.6 321.6C1023.5 319.8 1030.6 318.9 1036.7 318.9C1042.8 318.9 1049.5 319.6 1054.0 321.7C1058.5 323.8 1062.3 329.6 1064.0 331.2" fill="none" stroke="#fbf3fb" stroke-width="2.6" stroke-linecap="round"/><path d="M1004.0 472.8C1001.3 476.9 992.5 491.5 987.7 497.2C982.9 502.9 979.1 504.5 975.0 506.8C970.9 509.1 968.9 510.8 963.3 510.8C957.7 510.8 947.6 508.6 941.5 506.8C935.4 505.0 929.1 501.1 926.6 499.9" fill="none" stroke="#fbf3fb" stroke-width="3.2" stroke-linecap="round"/><path d="M1036.7 317.7C1042.8 317.7 1049.5 318.4 1054.0 320.5C1058.5 322.6 1061.9 325.8 1064.0 330.0C1066.1 334.2 1066.9 340.7 1066.6 345.7C1066.3 350.7 1063.8 355.4 1062.0 360.0C1060.2 364.6 1058.5 368.7 1055.7 373.4C1052.9 378.1 1048.6 383.0 1045.0 388.0C1041.4 393.0 1038.1 397.1 1034.0 403.3C1029.9 409.5 1023.7 418.3 1020.4 425.0C1017.1 431.7 1017.1 435.3 1014.4 443.5C1011.7 451.7 1008.5 464.9 1004.0 474.0C999.5 483.1 992.5 492.7 987.7 498.4C982.9 504.1 979.1 505.7 975.0 508.0C970.9 510.3 968.9 512.0 963.3 512.0C957.7 512.0 947.6 509.8 941.5 508.0C935.4 506.2 932.9 505.9 926.6 501.1C920.3 496.3 909.2 485.9 903.5 479.4C897.8 472.9 894.5 466.9 892.5 462.0C890.5 457.1 890.6 454.2 891.3 450.0C892.0 445.8 892.1 441.8 896.5 437.0C900.9 432.2 910.1 425.7 917.6 421.2C925.1 416.7 934.4 413.1 941.5 410.0C948.6 406.9 955.6 405.8 960.0 402.5C964.4 399.2 966.2 394.1 968.0 390.0C969.8 385.9 969.4 382.2 970.5 378.0C971.6 373.8 972.4 370.0 974.4 364.7C976.4 359.4 977.8 352.2 982.3 346.2C986.8 340.2 995.4 332.8 1001.3 328.5C1007.2 324.2 1011.7 322.2 1017.6 320.4C1023.5 318.6 1030.6 317.7 1036.7 317.7Z" fill="none" stroke="#0a5cff" stroke-width="1.2"/><circle cx="1066.6" cy="345.7" r="5" fill="#0a5cff"/><circle cx="974.4" cy="364.7" r="5" fill="#0a5cff"/><circle cx="917.6" cy="421.2" r="5" fill="#0a5cff"/><circle cx="1014.4" cy="443.5" r="5" fill="#0a5cff"/><circle cx="926.6" cy="501.1" r="5" fill="#0a5cff"/></g></svg>
<svg class="a" style="left:0;top:0" width="1252" height="846" viewBox="0 0 1252 846"><rect x="641.4" y="103.7" width="11.100000000000023" height="10.899999999999991" fill="#555" stroke="#9a9a9a" stroke-width="1.5"/><circle cx="641.4" cy="103.7" r="2.6" fill="#9a9a9a"/><circle cx="641.4" cy="114.6" r="2.6" fill="#9a9a9a"/><circle cx="652.5" cy="103.7" r="2.6" fill="#9a9a9a"/><circle cx="652.5" cy="114.6" r="2.6" fill="#9a9a9a"/><rect x="706.5" y="103.7" width="11.100000000000023" height="10.899999999999991" fill="none" stroke="#fcae1b" stroke-width="1.5"/><circle cx="706.5" cy="103.7" r="2.6" fill="#fcae1b"/><circle cx="706.5" cy="114.6" r="2.6" fill="#fcae1b"/><circle cx="717.6" cy="103.7" r="2.6" fill="#fcae1b"/><circle cx="717.6" cy="114.6" r="2.6" fill="#fcae1b"/><path d="M696 100V122M760 100V122M764.3 100V122M865.4 100V122M896.4 100V122" stroke="#444" stroke-width="1"/><g stroke="#bbb" fill="none" stroke-width="1.5"><circle cx="779.9" cy="108.8" r="7.6"/><circle cx="850.1" cy="108.8" r="7.6"/></g><path d="M775.7 108.8H784.1M845.9 108.8H854.3M850.1 104.6V113" stroke="#bbb" stroke-width="1.9"/><path d="M873.9 105.5V101.8H877.8M884.4 101.8H888.3V105.5M888.3 112.3V116H884.4M877.8 116H873.9V112.3" stroke="#c4c4c4" stroke-width="1.7" fill="none"/><rect x="878.1" y="106" width="6" height="6" fill="#c4c4c4"/><path d="M907.5 109H920.3M913.9 102.6V115.4" stroke="#c4c4c4" stroke-width="1.7" fill="none"/><path d="M913.9 100.6L917 104.4H910.8ZM913.9 117.4L917 113.6H910.8ZM905.5 109L909.3 105.9V112.1ZM922.3 109L918.5 105.9V112.1Z" fill="#c4c4c4"/></svg>
<div class="a" style="left:1180px;top:97px;width:48px;height:445px;border-radius:4px 4px 0 0;background:#333"></div>
<svg class="a" style="left:0;top:0" width="1252" height="846" viewBox="0 0 1252 846"><rect x="1193.1" y="115.9" width="25" height="16.1" rx="2.5" fill="none" stroke="#ff0040" stroke-width="2.2"/><rect x="1196" y="119" width="19.4" height="9.9" fill="#ff0040"/><path d="M1199.1 127.3L1203.8 120.6" stroke="#333" stroke-width="1.2" stroke-linecap="round"/><path d="M1202.9 127.3L1207.6000000000001 120.6" stroke="#333" stroke-width="1.2" stroke-linecap="round"/><path d="M1206.4 127.3L1211.1000000000001 120.6" stroke="#333" stroke-width="1.2" stroke-linecap="round"/><path d="M1198.8 122.8L1200.5 120.6M1210.2 127.3L1212.4 124.6" stroke="#333" stroke-width="1.2" stroke-linecap="round"/><path d="M1207.5 231.4H1196.5A2 2 0 0 1 1194.5 229.4V215.4A2 2 0 0 1 1196.5 213.4H1213.6A2 2 0 0 1 1215.6 215.4V223.5" fill="none" stroke="#d0d0d0" stroke-width="1.7"/><path d="M1202.7 218L1209.2 222.3L1202.7 226.6Z" fill="#d0d0d0"/><g transform="translate(1215 231.2)"><circle r="2.77" fill="none" stroke="#d0d0d0" stroke-width="1.94"/><rect x="-0.97" y="-4.90" width="1.94" height="1.85" fill="#d0d0d0" transform="rotate(0)"/><rect x="-0.97" y="-4.90" width="1.94" height="1.85" fill="#d0d0d0" transform="rotate(45)"/><rect x="-0.97" y="-4.90" width="1.94" height="1.85" fill="#d0d0d0" transform="rotate(90)"/><rect x="-0.97" y="-4.90" width="1.94" height="1.85" fill="#d0d0d0" transform="rotate(135)"/><rect x="-0.97" y="-4.90" width="1.94" height="1.85" fill="#d0d0d0" transform="rotate(180)"/><rect x="-0.97" y="-4.90" width="1.94" height="1.85" fill="#d0d0d0" transform="rotate(225)"/><rect x="-0.97" y="-4.90" width="1.94" height="1.85" fill="#d0d0d0" transform="rotate(270)"/><rect x="-0.97" y="-4.90" width="1.94" height="1.85" fill="#d0d0d0" transform="rotate(315)"/></g><path d="M1205.3 308.9V316.4M1205.3 326.4V333.9M1192.8 321.4H1200.3M1210.3 321.4H1217.8" stroke="#8a3ffc" stroke-width="1"/><path d="M1207.7 323.79999999999995L1212.8999999999999 329.0" stroke="#8a3ffc" stroke-width="2.6" stroke-linecap="round"/><path d="M1207.7 319.0L1212.8999999999999 313.79999999999995" stroke="#8a3ffc" stroke-width="2.6" stroke-linecap="round"/><path d="M1202.8999999999999 323.79999999999995L1197.7 329.0" stroke="#8a3ffc" stroke-width="2.6" stroke-linecap="round"/><path d="M1202.8999999999999 319.0L1197.7 313.79999999999995" stroke="#8a3ffc" stroke-width="2.6" stroke-linecap="round"/></svg>
<div class="a clip" style="left:25px;top:542px;width:1203px;height:279px;border-radius:5px;background:#262626">
<div class="a" style="left:2.0px;top:2.0px;width:553.0px;height:28.3px;background:#222;"></div>
<div class="a" style="left:2.0px;top:2.0px;width:80.2px;height:27.5px;background:#5a5a5a;border-radius:4px;"></div>
<div class="a" style="left:181.8px;top:2.0px;width:28.6px;height:28.3px;background:#444;"></div>
<div class="a" style="left:212.0px;top:2.0px;width:343.0px;height:28.3px;background:#444;"></div>
<div class="a" style="left:271.5px;top:6.0px;width:19.3px;height:19.7px;background:;background:linear-gradient(#2c2c2c,#212121);border:1px solid #161616;border-radius:4px;"></div>
<div class="a" style="left:296.3px;top:6.0px;width:19.4px;height:19.7px;background:;background:linear-gradient(#2c2c2c,#212121);border:1px solid #161616;border-radius:4px;"></div>
<div class="a" style="left:331.5px;top:6.0px;width:129.0px;height:19.7px;background:#363636;border:1px solid #1a1a1a;border-radius:4px;"></div>
<div class="a" style="left:442.2px;top:6.0px;width:18.3px;height:19.7px;background:#222;border:1px solid #161616;border-radius:4px;"></div>
<div class="a" style="left:471.3px;top:6.0px;width:72.8px;height:19.7px;background:#3c3c3c;border:1px solid #1a1a1a;border-radius:4px;"></div>
<div class="a" style="left:495.8px;top:6.8px;width:24.2px;height:18.1px;background:#fdb01e;border-left:1px solid #1a1a1a;border-right:1px solid #1a1a1a;"></div>
<div class="a" style="left:2.2px;top:32.0px;width:105.3px;height:75.0px;background:#7030a0;"></div>
<div class="a" style="left:2.2px;top:109.0px;width:105.3px;height:27.5px;background:#333;"></div>
<div class="a" style="left:76.2px;top:79.3px;width:31.3px;height:27.7px;background:#444;border-left:1px solid #333;border-top:1px solid #333;"></div>
<div class="a" style="left:109.1px;top:32.0px;width:105.3px;height:75.0px;background:#7030a0;"></div>
<div class="a" style="left:109.1px;top:109.0px;width:105.3px;height:27.5px;background:#333;"></div>
<div class="a" style="left:183.1px;top:79.3px;width:31.3px;height:27.7px;background:#444;border-left:1px solid #333;border-top:1px solid #333;"></div>
<div class="a" style="left:216.0px;top:32.0px;width:105.3px;height:75.0px;background:#fdb01e;"></div>
<div class="a" style="left:216.0px;top:109.0px;width:105.3px;height:27.5px;background:#333;"></div>
<div class="a" style="left:290.0px;top:79.3px;width:31.3px;height:27.7px;background:#fdb01e;border-left:1px solid #333;border-top:1px solid #333;"></div>
<div class="a" style="left:323.4px;top:32.0px;width:105.3px;height:75.0px;background:#707070;"></div>
<div class="a" style="left:323.4px;top:109.0px;width:105.3px;height:27.5px;background:#333;"></div>
<div class="a" style="left:397.4px;top:79.3px;width:31.3px;height:27.7px;background:#444;border-left:1px solid #333;border-top:1px solid #333;"></div>
<div class="a" style="left:430.7px;top:32.0px;width:105.3px;height:75.0px;background:#484848;"></div>
<div class="a" style="left:430.7px;top:109.0px;width:105.3px;height:27.5px;background:#333;"></div>
<div class="a" style="left:504.7px;top:79.3px;width:31.3px;height:27.7px;background:#444;border-left:1px solid #333;border-top:1px solid #333;"></div>
<div class="a" style="left:537.0px;top:32.0px;width:17.5px;height:104.5px;background:#2e2e2e;"></div>
<div class="a" style="left:545.5px;top:34.0px;width:6.5px;height:13.5px;background:#444;border-radius:3px;"></div>
<div class="a" style="left:4.0px;top:129.0px;width:283.0px;height:5.6px;background:#444;border-radius:3px;"></div>
<div class="a" style="left:2.0px;top:139.0px;width:106.0px;height:140.0px;background:#484848;"></div>
<div class="a" style="left:108.0px;top:139.0px;width:386.4px;height:24.5px;background:#333;"></div>
<div class="a" style="left:108.0px;top:163.5px;width:386.4px;height:1.5px;background:#444;"></div>
<div class="a" style="left:108.0px;top:165.0px;width:386.4px;height:23.0px;background:#3a3a3a;"></div>
<div class="a" style="left:108.0px;top:188.0px;width:386.4px;height:1.0px;background:#2c2c2c;"></div>
<div class="a" style="left:108.0px;top:189.0px;width:386.4px;height:77.7px;background:#333;"></div>
<div class="a" style="left:108.0px;top:266.7px;width:386.4px;height:12.0px;background:#262626;"></div>
<div class="a" style="left:192.0px;top:270.0px;width:127.7px;height:5.6px;background:#444;border-radius:3px;"></div>
<div class="a" style="left:494.4px;top:139.0px;width:60.6px;height:140.0px;background:#444;"></div>
<div class="a" style="left:6.2px;top:143.2px;width:95.7px;height:19.5px;background:#222;border:1px solid #141414;border-radius:3px;"></div>
<div class="a" style="left:6.2px;top:167.4px;width:37.6px;height:17.0px;background:;background:linear-gradient(#2c2c2c,#212121);border:1px solid #161616;border-radius:3px;"></div>
<div class="a" style="left:64.4px;top:167.4px;width:37.5px;height:17.0px;background:;background:linear-gradient(#2c2c2c,#212121);border:1px solid #161616;border-radius:3px;"></div>
<div class="a" style="left:19.1px;top:215.2px;width:33.6px;height:33.6px;background:#222;border:2px solid #141414;border-radius:50%;"></div>
<div class="a" style="left:66.1px;top:222.4px;width:19.9px;height:19.2px;background:#222;border:2px solid #141414;border-radius:4px;"></div>
<div class="a" style="left:71.8px;top:227.6px;width:8.7px;height:8.9px;background:#fff;"></div>
<div class="a" style="left:502.3px;top:142.9px;width:19.9px;height:19.9px;background:#222;border:1px solid #141414;border-radius:3px;"></div>
<div class="a" style="left:528.7px;top:142.9px;width:19.9px;height:19.9px;background:#222;border:1px solid #141414;border-radius:3px;"></div>
<div class="a" style="left:500.6px;top:233.4px;width:49.6px;height:19.2px;background:#222;border:1px solid #141414;border-radius:3px;"></div>
<div class="a" style="left:128.2px;top:165.0px;width:1.0px;height:101.7px;background:#2b2b2b;"></div>
<div class="a" style="left:167.2px;top:165.0px;width:1.0px;height:101.7px;background:#2b2b2b;"></div>
<div class="a" style="left:206.2px;top:165.0px;width:1.0px;height:101.7px;background:#2b2b2b;"></div>
<div class="a" style="left:245.1px;top:165.0px;width:1.0px;height:101.7px;background:#2b2b2b;"></div>
<div class="a" style="left:284.1px;top:165.0px;width:1.0px;height:101.7px;background:#2b2b2b;"></div>
<div class="a" style="left:323.0px;top:165.0px;width:1.0px;height:101.7px;background:#2b2b2b;"></div>
<div class="a" style="left:362.0px;top:165.0px;width:1.0px;height:101.7px;background:#2b2b2b;"></div>
<div class="a" style="left:400.9px;top:165.0px;width:1.0px;height:101.7px;background:#2b2b2b;"></div>
<div class="a" style="left:439.9px;top:165.0px;width:1.0px;height:101.7px;background:#2b2b2b;"></div>
<div class="a" style="left:478.8px;top:165.0px;width:1.0px;height:101.7px;background:#2b2b2b;"></div>
<div class="a" style="left:156.6px;top:165.0px;width:2.6px;height:101.7px;background:#7030a0;"></div>
<div class="a" style="left:156.6px;top:167.8px;width:62.8px;height:16.2px;background:#7030a0;border-radius:0 2px 2px 0;"></div>
<div class="a" style="left:427.4px;top:164.7px;width:2.6px;height:102.0px;background:#fdb01e;"></div>
<div class="a" style="left:427.4px;top:167.6px;width:62.4px;height:16.6px;background:#fdb01e;border-radius:0 2px 2px 0;"></div>
<div class="a" style="left:556.7px;top:2.0px;width:198.3px;height:28.0px;background:#444;"></div>
<div class="a" style="left:556.7px;top:31.5px;width:198.3px;height:248.0px;background:#333;"></div>
<div class="a" style="left:747.3px;top:34.3px;width:5.3px;height:161.3px;background:#444;border-radius:3px;"></div>
<div class="a" style="left:627.7px;top:41.2px;width:116.8px;height:19.2px;background:#262626;border:1px solid #141414;border-radius:3px;"></div>
<div class="a" style="left:627.7px;top:70.2px;width:116.8px;height:49.3px;background:#262626;border:1px solid #141414;border-radius:3px;"></div>
<div class="a" style="left:628.7px;top:134.6px;width:9.5px;height:9.3px;background:#7030a0;border-radius:1.5px;box-shadow:0 0 0 1.3px #fdb01e;"></div>
<div class="a" style="left:645.7px;top:134.6px;width:9.5px;height:9.3px;background:#0070d0;border-radius:1.5px;box-shadow:0 0 0 1.1px #222;"></div>
<div class="a" style="left:662.8px;top:134.6px;width:9.5px;height:9.3px;background:#00b050;border-radius:1.5px;box-shadow:0 0 0 1.1px #222;"></div>
<div class="a" style="left:679.8px;top:134.6px;width:9.5px;height:9.3px;background:#ff6a00;border-radius:1.5px;box-shadow:0 0 0 1.1px #222;"></div>
<div class="a" style="left:696.8px;top:134.6px;width:9.5px;height:9.3px;background:#ff0000;border-radius:1.5px;box-shadow:0 0 0 1.1px #222;"></div>
<div class="a" style="left:713.9px;top:134.6px;width:9.5px;height:9.3px;background:#111;border-radius:1.5px;box-shadow:0 0 0 1.1px #222;"></div>
<div class="a" style="left:730.9px;top:134.6px;width:9.5px;height:9.3px;background:#808080;border-radius:1.5px;box-shadow:0 0 0 1.1px #222;"></div>
<div class="a" style="left:627.7px;top:158.0px;width:90.7px;height:19.4px;background:;background:linear-gradient(#2c2c2c,#212121);border:1px solid #161616;border-radius:4px;"></div>
<div class="a" style="left:724.4px;top:158.0px;width:20.4px;height:19.8px;background:;background:linear-gradient(#2c2c2c,#212121);border:1px solid #161616;border-radius:4px;"></div>
<div class="a" style="left:724.4px;top:212.3px;width:20.4px;height:19.6px;background:;background:linear-gradient(#2c2c2c,#212121);border:1px solid #161616;border-radius:4px;"></div>
<div class="a" style="left:631.6px;top:241.4px;width:86.8px;height:18.9px;background:#222;border:1px solid #141414;border-radius:3px;"></div>
<div class="a" style="left:724.4px;top:241.2px;width:20.4px;height:19.4px;background:;background:linear-gradient(#2c2c2c,#212121);border:1px solid #161616;border-radius:4px;"></div>
<div class="a" style="left:569.5px;top:271.2px;width:13.8px;height:13.0px;background:#222;border:1px solid #141414;border-radius:2px;"></div>
<div class="a" style="left:757.0px;top:2.0px;width:198.8px;height:28.0px;background:#444;"></div>
<div class="a" style="left:757.0px;top:31.5px;width:198.8px;height:248.0px;background:#333;"></div>
<div class="a" style="left:835.1px;top:41.4px;width:110.3px;height:19.0px;background:#262626;border:1px solid #141414;border-radius:3px;"></div>
<div class="a" style="left:836.3px;top:75.3px;width:9.4px;height:9.3px;background:#7030a0;border-radius:1.5px;box-shadow:0 0 0 1.3px #fdb01e;"></div>
<div class="a" style="left:852.3px;top:75.3px;width:9.4px;height:9.3px;background:#0070d0;border-radius:1.5px;box-shadow:0 0 0 1.1px #222;"></div>
<div class="a" style="left:868.3px;top:75.3px;width:9.4px;height:9.3px;background:#00b050;border-radius:1.5px;box-shadow:0 0 0 1.1px #222;"></div>
<div class="a" style="left:884.2px;top:75.3px;width:9.4px;height:9.3px;background:#ff6a00;border-radius:1.5px;box-shadow:0 0 0 1.1px #222;"></div>
<div class="a" style="left:900.2px;top:75.3px;width:9.4px;height:9.3px;background:#ff0000;border-radius:1.5px;box-shadow:0 0 0 1.1px #222;"></div>
<div class="a" style="left:916.2px;top:75.3px;width:9.4px;height:9.3px;background:#111;border-radius:1.5px;box-shadow:0 0 0 1.1px #222;"></div>
<div class="a" style="left:932.2px;top:75.3px;width:9.4px;height:9.3px;background:#808080;border-radius:1.5px;box-shadow:0 0 0 1.1px #222;"></div>
<div class="a" style="left:835.1px;top:99.5px;width:109.3px;height:19.0px;background:#222;border:1px solid #141414;border-radius:3px;"></div>
<div class="a" style="left:835.1px;top:128.8px;width:109.3px;height:18.6px;background:;background:linear-gradient(#2c2c2c,#212121);border:1px solid #161616;border-radius:4px;"></div>
<div class="a" style="left:957.4px;top:2.0px;width:198.0px;height:28.0px;background:#444;"></div>
<div class="a" style="left:957.4px;top:31.5px;width:198.0px;height:248.0px;background:#333;"></div>
<div class="a" style="left:1155.4px;top:2.0px;width:46.0px;height:278.0px;background:#303030;"></div>
<div class="a" style="left:1124.8px;top:42.2px;width:20.0px;height:19.4px;background:;background:linear-gradient(#2c2c2c,#212121);border:1px solid #161616;border-radius:4px;"></div>
<div class="a" style="left:971.3px;top:70.4px;width:31.4px;height:87.0px;background:#222;border:1px solid #181818;border-radius:3px;overflow:hidden;"></div>
<div class="a" style="left:972.3px;top:71.4px;width:29.4px;height:19.8px;background:#3c3c3c;border-radius:2px 2px 0 0;"></div>
<div class="a" style="left:1010.3px;top:70.4px;width:134.2px;height:87.0px;background:#222;border:1px solid #181818;border-radius:3px;"></div>
<div class="a" style="left:1011.3px;top:71.4px;width:132.2px;height:19.8px;background:#3c3c3c;border-radius:2px 2px 0 0;"></div>
<div class="a" style="left:1022.0px;top:98.8px;width:28.9px;height:57.6px;background:#7030a0;"></div>
<div class="a" style="left:1063.0px;top:131.8px;width:29.0px;height:24.6px;background:#0070c0;"></div>
<div class="a" style="left:1103.9px;top:150.7px;width:29.1px;height:5.7px;background:#00b050;"></div>
<div class="a" style="left:985.2px;top:96.9px;width:3.7px;height:54.5px;background:#444;border-radius:2px;"></div>
<div class="a" style="left:985.2px;top:138.0px;width:3.7px;height:13.4px;background:#fcae1b;border-radius:2px;"></div>
<div class="a" style="left:981.8px;top:132.7px;width:10.4px;height:10.4px;background:#fcae1b;border-radius:50%;"></div>
<div class="a" style="left:971.4px;top:192.4px;width:90.4px;height:19.0px;background:#444;border:1px solid #222;border-radius:3px;"></div>
<div class="a" style="left:1070.2px;top:192.4px;width:74.6px;height:47.0px;background:;background:linear-gradient(#2c2c2c,#212121);border:1px solid #161616;border-radius:4px;"></div>
<div class="a" style="left:1002.2px;top:220.2px;width:59.6px;height:19.2px;background:#222;border:1px solid #141414;border-radius:3px;"></div>
<div class="a" style="left:1070.2px;top:248.4px;width:74.6px;height:24.1px;background:;background:linear-gradient(#2c2c2c,#212121);border:1px solid #161616;border-radius:4px;"></div>
<div class="a" style="left:971.2px;top:253.0px;width:5.9px;height:15.7px;background:#555;"></div>
<div class="a" style="left:999.1px;top:253.0px;width:5.9px;height:15.7px;background:#555;"></div>
<div class="a" style="left:1055.0px;top:253.0px;width:5.9px;height:15.7px;background:#555;"></div>
<div class="a" style="left:1026.9px;top:248.8px;width:6.1px;height:23.0px;background:#fcae1b;"></div>
<div class="a" style="left:1160.8px;top:10.0px;width:38.1px;height:31.8px;background:#222;border:1px solid #5a5a5a;border-radius:4px;"></div>
<div class="a" style="left:1160.2px;top:15.6px;width:2.9px;height:20.4px;background:#fcae1b;border-radius:1px;"></div>
<div class="a" style="left:1160.8px;top:50.3px;width:38.1px;height:31.8px;background:#222;border:1px solid #5a5a5a;border-radius:4px;"></div>
<div class="a" style="left:1160.2px;top:55.9px;width:2.9px;height:20.4px;background:#fcae1b;border-radius:1px;"></div>
<div class="a" style="left:1160.8px;top:98.2px;width:38.1px;height:31.8px;background:#222;border:1px solid #5a5a5a;border-radius:4px;"></div>
<div class="a" style="left:1160.2px;top:103.8px;width:2.9px;height:20.4px;background:#fcae1b;border-radius:1px;"></div>
<div class="a" style="left:1160.0px;top:89.5px;width:35.7px;height:1.5px;background:#444;"></div>
</div>
<div class="a t" style="top:552.90px;font-size:12.4px;color:#f0f0f0;font-weight:bold;left:33.9px;">Sequences</div>
<div class="a t" style="top:552.49px;font-size:11px;color:#777;left:263px;width:300px;text-align:center;">Autopilot</div>
<div class="a t" style="top:581.66px;font-size:12.8px;color:#fff;font-weight:bold;left:35.2px;">Seq 1</div>
<div class="a t" style="top:581.66px;font-size:12.8px;color:#fff;font-weight:bold;left:142.1px;">Seq 2</div>
<div class="a t" style="top:581.66px;font-size:12.8px;color:#000;font-weight:bold;left:249.3px;">Seq 3</div>
<div class="a t" style="top:581.66px;font-size:12.8px;color:#fff;font-weight:bold;left:356.4px;">Seq 4</div>
<div class="a t" style="top:581.66px;font-size:12.8px;color:#999;font-weight:bold;left:463.4px;">Seq 5</div>
<div class="a t" style="top:689.12px;font-size:11.2px;color:#eee;left:34.5px;">00:00:00.000</div>
<div class="a t" style="top:682.83px;font-size:10px;color:#ccc;left:274.6px;">10</div>
<div class="a t" style="top:682.83px;font-size:10px;color:#ccc;left:468.9px;">15</div>
<div class="a t" style="top:713.73px;font-size:10.6px;color:#fff;font-weight:bold;left:187.3px;">Play Seq 2</div>
<div class="a t" style="top:713.83px;font-size:10.6px;color:#111;font-weight:bold;left:457.8px;">Play Seq 3</div>
<div class="a t" style="top:779.37px;font-size:11.5px;color:#eee;letter-spacing:-0.4px;left:529.2px;">301%</div>
<div class="a t" style="top:552.00px;font-size:13px;color:#e8e8e8;font-weight:bold;left:591.3px;">Sequence Settings</div>
<div class="a t" style="top:552.84px;font-size:12px;color:#ccc;left:469.5px;width:300px;text-align:right;">Seq 3</div>
<div class="a t" style="top:587.44px;font-size:12px;color:#ccc;left:590.6px;">Name</div>
<div class="a t" style="top:587.84px;font-size:12px;color:#f4f4f4;left:655.7px;">Seq 3</div>
<div class="a t" style="top:616.34px;font-size:12px;color:#ccc;left:590.6px;">Comment</div>
<div class="a t" style="top:675.24px;font-size:12px;color:#ccc;left:590.6px;">Color</div>
<div class="a t" style="top:705.27px;font-size:11.5px;color:#ccc;letter-spacing:-0.3px;left:590.6px;">Map</div>
<div class="a t" style="top:705.37px;font-size:11.5px;color:#f4f4f4;left:658.3px;">Map 1</div>
<div class="a t" style="top:730.93px;font-size:12.6px;color:#fff;font-weight:bold;left:608.7px;">Transition in</div>
<div class="a t" style="top:758.54px;font-size:12px;color:#ccc;left:595.4px;">Type</div>
<div class="a t" style="top:758.54px;font-size:12px;color:#f4f4f4;left:656.2px;">Fade</div>
<div class="a t" style="top:759.47px;font-size:11.5px;color:#f4f4f4;font-weight:bold;left:609.6px;width:300px;text-align:center;">...</div>
<div class="a t" style="top:787.24px;font-size:12px;color:#ccc;left:594.5px;">Settings</div>
<div class="a t" style="top:787.67px;font-size:11.5px;color:#f4f4f4;left:659.8px;">0.20 s</div>
<div class="a clip" style="left:610px;top:808px;width:165px;height:11px"><div class="a t" style="left:6.7px;top:5.3px;font-size:12px;color:#ccc">Clip transition overflow</div></div>
<div class="a t" style="top:551.80px;font-size:13px;color:#e8e8e8;font-weight:bold;left:791.6px;">Cue Settings</div>
<div class="a t" style="top:552.80px;font-size:11.7px;color:#ccc;left:669.3px;width:300px;text-align:right;">Play Seq 3</div>
<div class="a t" style="top:587.14px;font-size:12px;color:#ccc;left:790.7px;">Name</div>
<div class="a t" style="top:587.40px;font-size:11.7px;color:#f4f4f4;left:863px;">Play Seq 3</div>
<div class="a t" style="top:616.44px;font-size:12px;color:#ccc;left:790.7px;">Color</div>
<div class="a t" style="top:645.24px;font-size:12px;color:#ccc;letter-spacing:-0.1px;left:790.7px;">Timestamp</div>
<div class="a t" style="top:645.92px;font-size:11.2px;color:#f4f4f4;left:863.5px;">00:00:14.688</div>
<div class="a t" style="top:674.54px;font-size:12px;color:#ccc;left:790.7px;">Action</div>
<div class="a t" style="top:675.39px;font-size:11px;color:#f4f4f4;left:865.8px;">Play Seq 3</div>
<div class="a t" style="top:553.00px;font-size:12.4px;color:#e0e0e0;font-weight:bold;left:992.2px;">Audio Analysis &amp; Tempo</div>
<div class="a t" style="top:588.99px;font-size:12.3px;color:#fff;font-weight:bold;left:1010.1px;">Audio Analysis</div>
<div class="a t" style="top:618.11px;font-size:10.5px;color:#ccc;left:862px;width:300px;text-align:center;">Gain</div>
<div class="a t" style="top:618.11px;font-size:10.5px;color:#ccc;left:910.5999999999999px;width:300px;text-align:center;">Bass</div>
<div class="a t" style="top:618.11px;font-size:10.5px;color:#ccc;left:951.8px;width:300px;text-align:center;">Mid</div>
<div class="a t" style="top:618.11px;font-size:10.5px;color:#ccc;left:993.4000000000001px;width:300px;text-align:center;">High</div>
<div class="a t" style="top:711.39px;font-size:12.3px;color:#fff;font-weight:bold;left:1010.4px;">Tempo</div>
<div class="a t" style="top:738.89px;font-size:11px;color:#888;left:891.5px;width:300px;text-align:center;">Ableton Link</div>
<div class="a t" style="top:753.67px;font-size:11.5px;color:#f4f4f4;left:982px;width:300px;text-align:center;">TAP</div>
<div class="a t" style="top:766.24px;font-size:12px;color:#ccc;letter-spacing:-0.3px;left:996.4px;">BPM</div>
<div class="a t" style="top:766.72px;font-size:11.2px;color:#f4f4f4;left:1031.8px;">120</div>
<div class="a t" style="top:797.17px;font-size:11.5px;color:#f4f4f4;left:982px;width:300px;text-align:center;">Resync</div>
<svg class="a" style="left:0;top:0" width="1252" height="846" viewBox="0 0 1252 846"><defs><clipPath id="bt"><rect x="27" y="544" width="1199" height="275"/></clipPath></defs><g clip-path="url(#bt)"><path d="M214 558.2H228M221 551.2V565.2" stroke="#fff" stroke-width="3.2"/><path d="M252.6 553.2V563L246.6 558.1ZM266 553.2V563L272 558.1Z" fill="#ddd"/><rect x="302.59999999999997" y="554.1" width="2.1" height="7.8" fill="#ddd"/><path d="M309.8 554.1V561.9L304.59999999999997 558Z" fill="#ddd"/><rect x="332.5" y="554.1" width="2.1" height="7.8" fill="#ddd"/><path d="M327.4 554.1V561.9L332.6 558Z" fill="#ddd"/><g transform="translate(476.3 558)"><circle r="3.06" fill="none" stroke="#e0e0e0" stroke-width="2.14"/><rect x="-1.07" y="-5.40" width="2.14" height="2.04" fill="#e0e0e0" transform="rotate(0)"/><rect x="-1.07" y="-5.40" width="2.14" height="2.04" fill="#e0e0e0" transform="rotate(45)"/><rect x="-1.07" y="-5.40" width="2.14" height="2.04" fill="#e0e0e0" transform="rotate(90)"/><rect x="-1.07" y="-5.40" width="2.14" height="2.04" fill="#e0e0e0" transform="rotate(135)"/><rect x="-1.07" y="-5.40" width="2.14" height="2.04" fill="#e0e0e0" transform="rotate(180)"/><rect x="-1.07" y="-5.40" width="2.14" height="2.04" fill="#e0e0e0" transform="rotate(225)"/><rect x="-1.07" y="-5.40" width="2.14" height="2.04" fill="#e0e0e0" transform="rotate(270)"/><rect x="-1.07" y="-5.40" width="2.14" height="2.04" fill="#e0e0e0" transform="rotate(315)"/></g><polygon points="508.6,553.9 512.2,556.0 512.2,560.0 508.6,562.1 505.0,560.0 505.0,556.0" fill="#808080"/><polygon points="532.8,552.7 537.4,555.4 537.4,560.6 532.8,563.3 528.2,560.6 528.2,555.4" fill="#111"/><polygon points="556.7,551.3 562.5,554.6 562.5,561.4 556.7,564.7 550.9,561.4 550.9,554.6" fill="#858585"/><path d="M456 649L561 574" stroke="#383838" stroke-width="2.6"/><rect x="529.7" y="621.3" width="31.3" height="27.7" fill="#333"/><rect x="530.7" y="622.3" width="30.3" height="26.7" fill="#444"/><circle cx="334" cy="586" r="2.8" fill="#111"/><g transform="translate(109.9 642.2) rotate(-42)" fill="#c8c8c8"><path d="M0 0L3.6 -2.1H13.2V2.1H3.6Z"/><rect x="14.1" y="-2.1" width="3.9" height="4.2"/></g><g transform="translate(216.8 642.2) rotate(-42)" fill="#c8c8c8"><path d="M0 0L3.6 -2.1H13.2V2.1H3.6Z"/><rect x="14.1" y="-2.1" width="3.9" height="4.2"/></g><g transform="translate(323.7 642.2) rotate(-42)" fill="#111"><path d="M0 0L3.6 -2.1H13.2V2.1H3.6Z"/><rect x="14.1" y="-2.1" width="3.9" height="4.2"/></g><g transform="translate(431.09999999999997 642.2) rotate(-42)" fill="#c8c8c8"><path d="M0 0L3.6 -2.1H13.2V2.1H3.6Z"/><rect x="14.1" y="-2.1" width="3.9" height="4.2"/></g><g transform="translate(538.4 642.2) rotate(-42)" fill="#c8c8c8"><path d="M0 0L3.6 -2.1H13.2V2.1H3.6Z"/><rect x="14.1" y="-2.1" width="3.9" height="4.2"/></g><rect x="153.2" y="698.6" width="1" height="6.6" fill="#ccc"/><rect x="192.2" y="698.6" width="1" height="6.6" fill="#ccc"/><rect x="231.2" y="698.6" width="1" height="6.6" fill="#ccc"/><rect x="269.6" y="681.2" width="2" height="24" fill="#ddd"/><rect x="309.1" y="698.6" width="1" height="6.6" fill="#ccc"/><rect x="348.0" y="698.6" width="1" height="6.6" fill="#ccc"/><rect x="387.0" y="698.6" width="1" height="6.6" fill="#ccc"/><rect x="425.9" y="698.6" width="1" height="6.6" fill="#ccc"/><rect x="464.4" y="681.2" width="2" height="24" fill="#ddd"/><rect x="503.8" y="698.6" width="1" height="6.6" fill="#ccc"/><defs><clipPath id="wfc"><rect x="133" y="731" width="386.4" height="77.7"/></clipPath></defs><g fill="#d4d4d4" clip-path="url(#wfc)"><polygon points="132.0,764.6 133.1,763.1 133.5,758.6 134.7,758.6 135.1,763.1 136.2,764.6 136.2,776.4 135.1,777.9 134.7,782.4 133.5,782.4 133.1,777.9 132.0,776.4"/><polygon points="136.1,766.0 137.2,764.9 137.6,761.5 138.7,761.5 139.2,764.9 140.2,766.0 140.2,775.0 139.2,776.1 138.7,779.5 137.6,779.5 137.2,776.1 136.1,775.0"/><polygon points="140.1,767.1 141.2,766.2 141.6,763.6 142.8,763.6 143.2,766.2 144.2,767.1 144.2,773.9 143.2,774.8 142.8,777.4 141.6,777.4 141.2,774.8 140.1,773.9"/><polygon points="143.1,758.9 144.2,756.1 144.6,747.3 145.8,747.3 146.2,756.1 147.2,758.9 147.2,782.1 146.2,784.9 145.8,793.7 144.6,793.7 144.2,784.9 143.1,782.1"/><polygon points="147.2,761.9 148.2,759.8 148.7,753.2 149.8,753.2 150.2,759.8 151.3,761.9 151.3,779.1 150.2,781.2 149.8,787.8 148.7,787.8 148.2,781.2 147.2,779.1"/><polygon points="151.2,764.0 152.3,762.5 152.7,757.6 153.8,757.6 154.3,762.5 155.3,764.0 155.3,777.0 154.3,778.5 153.8,783.4 152.7,783.4 152.3,778.5 151.2,777.0"/><polygon points="155.3,765.6 156.3,764.4 156.8,760.7 157.9,760.7 158.3,764.4 159.4,765.6 159.4,775.4 158.3,776.6 157.9,780.3 156.8,780.3 156.3,776.6 155.3,775.4"/><polygon points="159.9,759.9 161.0,757.4 161.4,749.3 162.6,749.3 163.0,757.4 164.1,759.9 164.1,781.1 163.0,783.6 162.6,791.7 161.4,791.7 161.0,783.6 159.9,781.1"/><polygon points="164.0,762.6 165.1,760.7 165.5,754.7 166.6,754.7 167.1,760.7 168.1,762.6 168.1,778.4 167.1,780.3 166.6,786.3 165.5,786.3 165.1,780.3 164.0,778.4"/><polygon points="168.0,764.6 169.1,763.1 169.5,758.6 170.7,758.6 171.1,763.1 172.2,764.6 172.2,776.4 171.1,777.9 170.7,782.4 169.5,782.4 169.1,777.9 168.0,776.4"/><polygon points="172.1,766.0 173.2,764.9 173.6,761.5 174.7,761.5 175.2,764.9 176.2,766.0 176.2,775.0 175.2,776.1 174.7,779.5 173.6,779.5 173.2,776.1 172.1,775.0"/><polygon points="176.1,767.1 177.2,766.2 177.6,763.6 178.8,763.6 179.2,766.2 180.2,767.1 180.2,773.9 179.2,774.8 178.8,777.4 177.6,777.4 177.2,774.8 176.1,773.9"/><polygon points="180.2,767.8 181.2,767.2 181.7,765.2 182.8,765.2 183.2,767.2 184.3,767.8 184.3,773.2 183.2,773.8 182.8,775.8 181.7,775.8 181.2,773.8 180.2,773.2"/><polygon points="183.0,762.9 184.1,761.1 184.5,755.3 185.7,755.3 186.1,761.1 187.2,762.9 187.2,778.1 186.1,779.9 185.7,785.7 184.5,785.7 184.1,779.9 183.0,778.1"/><polygon points="187.1,764.8 188.2,763.4 188.6,759.1 189.7,759.1 190.2,763.4 191.2,764.8 191.2,776.2 190.2,777.6 189.7,781.9 188.6,781.9 188.2,777.6 187.1,776.2"/><polygon points="191.1,766.2 192.2,765.1 192.6,761.8 193.8,761.8 194.2,765.1 195.2,766.2 195.2,774.8 194.2,775.9 193.8,779.2 192.6,779.2 192.2,775.9 191.1,774.8"/><polygon points="195.2,767.2 196.2,766.4 196.7,763.9 197.8,763.9 198.2,766.4 199.3,767.2 199.3,773.8 198.2,774.6 197.8,777.1 196.7,777.1 196.2,774.6 195.2,773.8"/><polygon points="199.0,759.9 200.1,757.4 200.5,749.3 201.7,749.3 202.1,757.4 203.2,759.9 203.2,781.1 202.1,783.6 201.7,791.7 200.5,791.7 200.1,783.6 199.0,781.1"/><polygon points="203.1,762.6 204.2,760.7 204.6,754.7 205.7,754.7 206.2,760.7 207.2,762.6 207.2,778.4 206.2,780.3 205.7,786.3 204.6,786.3 204.2,780.3 203.1,778.4"/><polygon points="207.1,764.6 208.2,763.1 208.6,758.6 209.8,758.6 210.2,763.1 211.2,764.6 211.2,776.4 210.2,777.9 209.8,782.4 208.6,782.4 208.2,777.9 207.1,776.4"/><polygon points="211.2,766.0 212.2,764.9 212.7,761.5 213.8,761.5 214.2,764.9 215.3,766.0 215.3,775.0 214.2,776.1 213.8,779.5 212.7,779.5 212.2,776.1 211.2,775.0"/><polygon points="215.3,759.1 216.4,756.4 216.8,747.8 218.0,747.8 218.4,756.4 219.5,759.1 219.5,781.9 218.4,784.6 218.0,793.2 216.8,793.2 216.4,784.6 215.3,781.9"/><polygon points="219.4,762.1 220.5,760.0 220.9,753.6 222.0,753.6 222.5,760.0 223.5,762.1 223.5,778.9 222.5,781.0 222.0,787.4 220.9,787.4 220.5,781.0 219.4,778.9"/><polygon points="223.4,764.2 224.5,762.7 224.9,757.8 226.1,757.8 226.5,762.7 227.6,764.2 227.6,776.8 226.5,778.3 226.1,783.2 224.9,783.2 224.5,778.3 223.4,776.8"/><polygon points="227.5,765.7 228.6,764.6 229.0,760.9 230.1,760.9 230.6,764.6 231.6,765.7 231.6,775.3 230.6,776.4 230.1,780.1 229.0,780.1 228.6,776.4 227.5,775.3"/><polygon points="231.5,766.8 232.6,766.0 233.0,763.2 234.2,763.2 234.6,766.0 235.7,766.8 235.7,774.2 234.6,775.0 234.2,777.8 233.0,777.8 232.6,775.0 231.5,774.2"/><polygon points="235.2,759.1 236.3,756.4 236.8,747.8 237.9,747.8 238.3,756.4 239.4,759.1 239.4,781.9 238.3,784.6 237.9,793.2 236.8,793.2 236.3,784.6 235.2,781.9"/><polygon points="239.3,762.1 240.4,760.0 240.8,753.6 241.9,753.6 242.4,760.0 243.4,762.1 243.4,778.9 242.4,781.0 241.9,787.4 240.8,787.4 240.4,781.0 239.3,778.9"/><polygon points="243.3,764.2 244.4,762.7 244.8,757.8 246.0,757.8 246.4,762.7 247.5,764.2 247.5,776.8 246.4,778.3 246.0,783.2 244.8,783.2 244.4,778.3 243.3,776.8"/><polygon points="247.4,765.7 248.5,764.6 248.9,760.9 250.0,760.9 250.5,764.6 251.5,765.7 251.5,775.3 250.5,776.4 250.0,780.1 248.9,780.1 248.5,776.4 247.4,775.3"/><polygon points="251.4,766.8 252.5,766.0 252.9,763.2 254.1,763.2 254.5,766.0 255.6,766.8 255.6,774.2 254.5,775.0 254.1,777.8 252.9,777.8 252.5,775.0 251.4,774.2"/><polygon points="255.2,760.9 256.3,758.6 256.8,751.3 257.9,751.3 258.3,758.6 259.4,760.9 259.4,780.1 258.3,782.4 257.9,789.7 256.8,789.7 256.3,782.4 255.2,780.1"/><polygon points="259.3,763.3 260.4,761.6 260.8,756.2 261.9,756.2 262.4,761.6 263.4,763.3 263.4,777.7 262.4,779.4 261.9,784.8 260.8,784.8 260.4,779.4 259.3,777.7"/><polygon points="263.4,765.1 264.4,763.8 264.9,759.7 266.0,759.7 266.4,763.8 267.5,765.1 267.5,775.9 266.4,777.2 266.0,781.3 264.9,781.3 264.4,777.2 263.4,775.9"/><polygon points="267.4,766.4 268.4,765.4 268.9,762.3 270.0,762.3 270.4,765.4 271.5,766.4 271.5,774.6 270.4,775.6 270.0,778.7 268.9,778.7 268.4,775.6 267.4,774.6"/><polygon points="272.6,760.9 273.6,758.6 274.1,751.3 275.2,751.3 275.6,758.6 276.7,760.9 276.7,780.1 275.6,782.4 275.2,789.7 274.1,789.7 273.6,782.4 272.6,780.1"/><polygon points="276.6,763.3 277.7,761.6 278.1,756.2 279.2,756.2 279.7,761.6 280.7,763.3 280.7,777.7 279.7,779.4 279.2,784.8 278.1,784.8 277.7,779.4 276.6,777.7"/><polygon points="280.7,765.1 281.7,763.8 282.2,759.7 283.3,759.7 283.7,763.8 284.8,765.1 284.8,775.9 283.7,777.2 283.3,781.3 282.2,781.3 281.7,777.2 280.7,775.9"/><polygon points="284.7,766.4 285.8,765.4 286.2,762.3 287.3,762.3 287.8,765.4 288.8,766.4 288.8,774.6 287.8,775.6 287.3,778.7 286.2,778.7 285.8,775.6 284.7,774.6"/><polygon points="288.8,767.3 289.8,766.6 290.2,764.2 291.4,764.2 291.8,766.6 292.9,767.3 292.9,773.7 291.8,774.4 291.4,776.8 290.2,776.8 289.8,774.4 288.8,773.7"/><polygon points="291.6,758.4 292.7,755.5 293.1,746.3 294.2,746.3 294.7,755.5 295.8,758.4 295.8,782.6 294.7,785.5 294.2,794.7 293.1,794.7 292.7,785.5 291.6,782.6"/><polygon points="295.7,761.5 296.8,759.3 297.2,752.5 298.3,752.5 298.8,759.3 299.8,761.5 299.8,779.5 298.8,781.7 298.3,788.5 297.2,788.5 296.8,781.7 295.7,779.5"/><polygon points="299.8,763.8 300.8,762.2 301.2,757.0 302.4,757.0 302.8,762.2 303.9,763.8 303.9,777.2 302.8,778.8 302.4,784.0 301.2,784.0 300.8,778.8 299.8,777.2"/><polygon points="303.8,765.4 304.8,764.2 305.3,760.4 306.4,760.4 306.8,764.2 307.9,765.4 307.9,775.6 306.8,776.8 306.4,780.6 305.3,780.6 304.8,776.8 303.8,775.6"/><polygon points="307.8,766.6 308.9,765.7 309.3,762.8 310.4,762.8 310.9,765.7 311.9,766.6 311.9,774.4 310.9,775.3 310.4,778.2 309.3,778.2 308.9,775.3 307.8,774.4"/><polygon points="311.6,759.4 312.6,756.7 313.1,748.3 314.2,748.3 314.6,756.7 315.7,759.4 315.7,781.6 314.6,784.3 314.2,792.7 313.1,792.7 312.6,784.3 311.6,781.6"/><polygon points="315.6,762.2 316.7,760.3 317.1,754.0 318.2,754.0 318.7,760.3 319.7,762.2 319.7,778.8 318.7,780.7 318.2,787.0 317.1,787.0 316.7,780.7 315.6,778.8"/><polygon points="319.7,764.3 320.7,762.8 321.2,758.1 322.3,758.1 322.7,762.8 323.8,764.3 323.8,776.7 322.7,778.2 322.3,782.9 321.2,782.9 320.7,778.2 319.7,776.7"/><polygon points="323.7,765.8 324.8,764.7 325.2,761.1 326.3,761.1 326.8,764.7 327.8,765.8 327.8,775.2 326.8,776.3 326.3,779.9 325.2,779.9 324.8,776.3 323.7,775.2"/><polygon points="327.8,766.9 328.8,766.1 329.2,763.3 330.4,763.3 330.8,766.1 331.9,766.9 331.9,774.1 330.8,774.9 330.4,777.7 329.2,777.7 328.8,774.9 327.8,774.1"/><polygon points="330.6,759.9 331.7,757.4 332.1,749.3 333.2,749.3 333.7,757.4 334.8,759.9 334.8,781.1 333.7,783.6 333.2,791.7 332.1,791.7 331.7,783.6 330.6,781.1"/><polygon points="334.7,762.6 335.8,760.7 336.2,754.7 337.3,754.7 337.8,760.7 338.8,762.6 338.8,778.4 337.8,780.3 337.3,786.3 336.2,786.3 335.8,780.3 334.7,778.4"/><polygon points="338.8,764.6 339.8,763.1 340.2,758.6 341.4,758.6 341.8,763.1 342.9,764.6 342.9,776.4 341.8,777.9 341.4,782.4 340.2,782.4 339.8,777.9 338.8,776.4"/><polygon points="342.8,766.0 343.8,764.9 344.3,761.5 345.4,761.5 345.8,764.9 346.9,766.0 346.9,775.0 345.8,776.1 345.4,779.5 344.3,779.5 343.8,776.1 342.8,775.0"/><polygon points="347.9,758.9 349.0,756.1 349.4,747.3 350.6,747.3 351.0,756.1 352.1,758.9 352.1,782.1 351.0,784.9 350.6,793.7 349.4,793.7 349.0,784.9 347.9,782.1"/><polygon points="352.0,761.9 353.1,759.8 353.5,753.2 354.6,753.2 355.1,759.8 356.1,761.9 356.1,779.1 355.1,781.2 354.6,787.8 353.5,787.8 353.1,781.2 352.0,779.1"/><polygon points="356.1,764.0 357.1,762.5 357.6,757.6 358.7,757.6 359.1,762.5 360.2,764.0 360.2,777.0 359.1,778.5 358.7,783.4 357.6,783.4 357.1,778.5 356.1,777.0"/><polygon points="360.1,765.6 361.1,764.4 361.6,760.7 362.7,760.7 363.1,764.4 364.2,765.6 364.2,775.4 363.1,776.6 362.7,780.3 361.6,780.3 361.1,776.6 360.1,775.4"/><polygon points="365.8,759.9 366.9,757.4 367.3,749.3 368.4,749.3 368.9,757.4 369.9,759.9 369.9,781.1 368.9,783.6 368.4,791.7 367.3,791.7 366.9,783.6 365.8,781.1"/><polygon points="369.9,762.6 370.9,760.7 371.4,754.7 372.5,754.7 372.9,760.7 374.0,762.6 374.0,778.4 372.9,780.3 372.5,786.3 371.4,786.3 370.9,780.3 369.9,778.4"/><polygon points="373.9,764.6 375.0,763.1 375.4,758.6 376.6,758.6 377.0,763.1 378.1,764.6 378.1,776.4 377.0,777.9 376.6,782.4 375.4,782.4 375.0,777.9 373.9,776.4"/><polygon points="378.0,766.0 379.0,764.9 379.5,761.5 380.6,761.5 381.0,764.9 382.1,766.0 382.1,775.0 381.0,776.1 380.6,779.5 379.5,779.5 379.0,776.1 378.0,775.0"/><polygon points="382.0,767.1 383.1,766.2 383.5,763.6 384.6,763.6 385.1,766.2 386.1,767.1 386.1,773.9 385.1,774.8 384.6,777.4 383.5,777.4 383.1,774.8 382.0,773.9"/><polygon points="384.9,759.4 386.0,756.7 386.4,748.3 387.6,748.3 388.0,756.7 389.1,759.4 389.1,781.6 388.0,784.3 387.6,792.7 386.4,792.7 386.0,784.3 384.9,781.6"/><polygon points="389.0,762.2 390.1,760.3 390.5,754.0 391.6,754.0 392.1,760.3 393.1,762.2 393.1,778.8 392.1,780.7 391.6,787.0 390.5,787.0 390.1,780.7 389.0,778.8"/><polygon points="393.1,764.3 394.1,762.8 394.6,758.1 395.7,758.1 396.1,762.8 397.2,764.3 397.2,776.7 396.1,778.2 395.7,782.9 394.6,782.9 394.1,778.2 393.1,776.7"/><polygon points="397.1,765.8 398.1,764.7 398.6,761.1 399.7,761.1 400.1,764.7 401.2,765.8 401.2,775.2 400.1,776.3 399.7,779.9 398.6,779.9 398.1,776.3 397.1,775.2"/><polygon points="401.1,766.9 402.2,766.1 402.6,763.3 403.8,763.3 404.2,766.1 405.2,766.9 405.2,774.1 404.2,774.9 403.8,777.7 402.6,777.7 402.2,774.9 401.1,774.1"/><polygon points="403.6,758.4 404.7,755.5 405.1,746.3 406.2,746.3 406.7,755.5 407.8,758.4 407.8,782.6 406.7,785.5 406.2,794.7 405.1,794.7 404.7,785.5 403.6,782.6"/><polygon points="407.7,761.5 408.8,759.3 409.2,752.5 410.3,752.5 410.8,759.3 411.8,761.5 411.8,779.5 410.8,781.7 410.3,788.5 409.2,788.5 408.8,781.7 407.7,779.5"/><polygon points="411.8,763.8 412.8,762.2 413.2,757.0 414.4,757.0 414.8,762.2 415.9,763.8 415.9,777.2 414.8,778.8 414.4,784.0 413.2,784.0 412.8,778.8 411.8,777.2"/><polygon points="415.8,765.4 416.8,764.2 417.3,760.4 418.4,760.4 418.8,764.2 419.9,765.4 419.9,775.6 418.8,776.8 418.4,780.6 417.3,780.6 416.8,776.8 415.8,775.6"/><polygon points="419.8,766.6 420.9,765.7 421.3,762.8 422.4,762.8 422.9,765.7 423.9,766.6 423.9,774.4 422.9,775.3 422.4,778.2 421.3,778.2 420.9,775.3 419.8,774.4"/><polygon points="423.3,759.4 424.4,756.7 424.8,748.3 425.9,748.3 426.4,756.7 427.4,759.4 427.4,781.6 426.4,784.3 425.9,792.7 424.8,792.7 424.4,784.3 423.3,781.6"/><polygon points="427.4,762.2 428.4,760.3 428.9,754.0 430.0,754.0 430.4,760.3 431.5,762.2 431.5,778.8 430.4,780.7 430.0,787.0 428.9,787.0 428.4,780.7 427.4,778.8"/><polygon points="431.4,764.3 432.5,762.8 432.9,758.1 434.1,758.1 434.5,762.8 435.6,764.3 435.6,776.7 434.5,778.2 434.1,782.9 432.9,782.9 432.5,778.2 431.4,776.7"/><polygon points="435.5,765.8 436.5,764.7 437.0,761.1 438.1,761.1 438.5,764.7 439.6,765.8 439.6,775.2 438.5,776.3 438.1,779.9 437.0,779.9 436.5,776.3 435.5,775.2"/><polygon points="440.1,758.9 441.2,756.1 441.6,747.3 442.8,747.3 443.2,756.1 444.2,758.9 444.2,782.1 443.2,784.9 442.8,793.7 441.6,793.7 441.2,784.9 440.1,782.1"/><polygon points="444.2,761.9 445.2,759.8 445.7,753.2 446.8,753.2 447.2,759.8 448.3,761.9 448.3,779.1 447.2,781.2 446.8,787.8 445.7,787.8 445.2,781.2 444.2,779.1"/><polygon points="448.2,764.0 449.3,762.5 449.8,757.6 450.9,757.6 451.3,762.5 452.4,764.0 452.4,777.0 451.3,778.5 450.9,783.4 449.8,783.4 449.3,778.5 448.2,777.0"/><polygon points="452.3,765.6 453.3,764.4 453.8,760.7 454.9,760.7 455.3,764.4 456.4,765.6 456.4,775.4 455.3,776.6 454.9,780.3 453.8,780.3 453.3,776.6 452.3,775.4"/><polygon points="456.3,766.8 457.4,765.9 457.8,763.1 458.9,763.1 459.4,765.9 460.4,766.8 460.4,774.2 459.4,775.1 458.9,777.9 457.8,777.9 457.4,775.1 456.3,774.2"/><polygon points="459.9,758.4 461.0,755.5 461.4,746.3 462.6,746.3 463.0,755.5 464.1,758.4 464.1,782.6 463.0,785.5 462.6,794.7 461.4,794.7 461.0,785.5 459.9,782.6"/><polygon points="464.0,761.5 465.1,759.3 465.5,752.5 466.6,752.5 467.1,759.3 468.1,761.5 468.1,779.5 467.1,781.7 466.6,788.5 465.5,788.5 465.1,781.7 464.0,779.5"/><polygon points="468.1,763.8 469.1,762.2 469.6,757.0 470.7,757.0 471.1,762.2 472.2,763.8 472.2,777.2 471.1,778.8 470.7,784.0 469.6,784.0 469.1,778.8 468.1,777.2"/><polygon points="472.1,765.4 473.1,764.2 473.6,760.4 474.7,760.4 475.1,764.2 476.2,765.4 476.2,775.6 475.1,776.8 474.7,780.6 473.6,780.6 473.1,776.8 472.1,775.6"/><polygon points="476.1,766.6 477.2,765.7 477.6,762.8 478.8,762.8 479.2,765.7 480.2,766.6 480.2,774.4 479.2,775.3 478.8,778.2 477.6,778.2 477.2,775.3 476.1,774.4"/><polygon points="479.6,760.4 480.7,758.0 481.1,750.3 482.2,750.3 482.7,758.0 483.8,760.4 483.8,780.6 482.7,783.0 482.2,790.7 481.1,790.7 480.7,783.0 479.6,780.6"/><polygon points="483.7,763.0 484.8,761.2 485.2,755.4 486.3,755.4 486.8,761.2 487.8,763.0 487.8,778.0 486.8,779.8 486.3,785.6 485.2,785.6 484.8,779.8 483.7,778.0"/><polygon points="487.8,764.8 488.8,763.5 489.2,759.2 490.4,759.2 490.8,763.5 491.9,764.8 491.9,776.2 490.8,777.5 490.4,781.8 489.2,781.8 488.8,777.5 487.8,776.2"/><polygon points="491.8,766.2 492.8,765.2 493.3,761.9 494.4,761.9 494.8,765.2 495.9,766.2 495.9,774.8 494.8,775.8 494.4,779.1 493.3,779.1 492.8,775.8 491.8,774.8"/><polygon points="496.4,759.9 497.5,757.4 497.9,749.3 499.1,749.3 499.5,757.4 500.6,759.9 500.6,781.1 499.5,783.6 499.1,791.7 497.9,791.7 497.5,783.6 496.4,781.1"/><polygon points="500.5,762.6 501.6,760.7 502.0,754.7 503.1,754.7 503.6,760.7 504.6,762.6 504.6,778.4 503.6,780.3 503.1,786.3 502.0,786.3 501.6,780.3 500.5,778.4"/><polygon points="504.6,764.6 505.6,763.1 506.1,758.6 507.2,758.6 507.6,763.1 508.7,764.6 508.7,776.4 507.6,777.9 507.2,782.4 506.1,782.4 505.6,777.9 504.6,776.4"/><polygon points="508.6,766.0 509.6,764.9 510.1,761.5 511.2,761.5 511.6,764.9 512.7,766.0 512.7,775.0 511.6,776.1 511.2,779.5 510.1,779.5 509.6,776.1 508.6,775.0"/><polygon points="512.7,767.1 513.7,766.2 514.2,763.6 515.2,763.6 515.7,766.2 516.8,767.1 516.8,773.9 515.7,774.8 515.2,777.4 514.2,777.4 513.7,774.8 512.7,773.9"/><polygon points="515.2,758.4 516.2,755.5 516.7,746.3 517.8,746.3 518.2,755.5 519.2,758.4 519.2,782.6 518.2,785.5 517.8,794.7 516.7,794.7 516.2,785.5 515.2,782.6"/></g><rect x="189" y="744" width="0.9" height="53" fill="#ccc"/><rect x="181.6" y="707" width="2.6" height="101.7" fill="#7030a0"/><rect x="452.4" y="706.7" width="2.6" height="102" fill="#fdb01e"/><path d="M120.7 689.6L123 692.4H118.4Z" fill="#fff"/><path d="M120.7 700.8L123 698H118.4Z" fill="#999"/><rect x="46.4" y="714.0" width="2.1" height="7.8" fill="#ddd"/><path d="M53.6 714.0V721.8L48.4 717.9Z" fill="#ddd"/><rect x="109.7" y="714.0" width="2.1" height="7.8" fill="#ddd"/><path d="M104.60000000000001 714.0V721.8L109.8 717.9Z" fill="#ddd"/><path d="M56.9 766.2V781.9L68.9 774Z" fill="#fff"/><path d="M537.1 691.2H541.9V694.9ZM533 695.2V698.9H537.7Z" fill="#eee"/><g transform="translate(563.6 694.8)"><circle r="3.17" fill="none" stroke="#e0e0e0" stroke-width="2.22"/><rect x="-1.11" y="-5.60" width="2.22" height="2.11" fill="#e0e0e0" transform="rotate(0)"/><rect x="-1.11" y="-5.60" width="2.22" height="2.11" fill="#e0e0e0" transform="rotate(45)"/><rect x="-1.11" y="-5.60" width="2.22" height="2.11" fill="#e0e0e0" transform="rotate(90)"/><rect x="-1.11" y="-5.60" width="2.22" height="2.11" fill="#e0e0e0" transform="rotate(135)"/><rect x="-1.11" y="-5.60" width="2.22" height="2.11" fill="#e0e0e0" transform="rotate(180)"/><rect x="-1.11" y="-5.60" width="2.22" height="2.11" fill="#e0e0e0" transform="rotate(225)"/><rect x="-1.11" y="-5.60" width="2.22" height="2.11" fill="#e0e0e0" transform="rotate(270)"/><rect x="-1.11" y="-5.60" width="2.22" height="2.11" fill="#e0e0e0" transform="rotate(315)"/></g><path d="M541.4 711V727" stroke="#fcae1b" stroke-width="2.5"/><rect x="541" y="712.7" width="11.5" height="6.3" fill="#fcae1b"/><path d="M551.3 723H561.7M556.5 717.8V728.2" stroke="#fcae1b" stroke-width="2.3" fill="none"/><path d="M539.9 739.5V746.3" stroke="#fcae1b" stroke-width="1.7"/><path d="M543.5 736.4V749.2" stroke="#fcae1b" stroke-width="1.7"/><path d="M547 739V746.8" stroke="#fcae1b" stroke-width="1.7"/><path d="M550.2 738.3V743.8" stroke="#fcae1b" stroke-width="1.7"/><path d="M553.3 738.3V743" stroke="#fcae1b" stroke-width="1.7"/><path d="M551.3 748H561.7M556.5 742.8V753.2" stroke="#fcae1b" stroke-width="2.3" fill="none"/><path d="M568.7 779.6L571 782.4H566.4ZM568.7 790.6L571 787.8H566.4Z" fill="#eee"/><g stroke="#c0c0c0" fill="none" stroke-width="1.5"><circle cx="535.2" cy="807.1" r="7.3"/><circle cx="565.4" cy="807.1" r="7.3"/></g><path d="M531.2 807.1H539.2M561.4 807.1H569.4M565.4 803.1V811.1" stroke="#c0c0c0" stroke-width="1.8"/><circle cx="631.4" cy="710.1" r="7" fill="#fcae1b"/><rect x="630.6" y="708.8" width="1.7" height="5" fill="#d07a00"/><rect x="630.6" y="706" width="1.7" height="1.8" fill="#d07a00"/><path d="M729.7 708.9H736.3L733 712.9Z" fill="#eee"/><g transform="translate(759.6 709.7)"><circle r="3.17" fill="none" stroke="#e0e0e0" stroke-width="2.22"/><rect x="-1.11" y="-5.60" width="2.22" height="2.11" fill="#e0e0e0" transform="rotate(0)"/><rect x="-1.11" y="-5.60" width="2.22" height="2.11" fill="#e0e0e0" transform="rotate(45)"/><rect x="-1.11" y="-5.60" width="2.22" height="2.11" fill="#e0e0e0" transform="rotate(90)"/><rect x="-1.11" y="-5.60" width="2.22" height="2.11" fill="#e0e0e0" transform="rotate(135)"/><rect x="-1.11" y="-5.60" width="2.22" height="2.11" fill="#e0e0e0" transform="rotate(180)"/><rect x="-1.11" y="-5.60" width="2.22" height="2.11" fill="#e0e0e0" transform="rotate(225)"/><rect x="-1.11" y="-5.60" width="2.22" height="2.11" fill="#e0e0e0" transform="rotate(270)"/><rect x="-1.11" y="-5.60" width="2.22" height="2.11" fill="#e0e0e0" transform="rotate(315)"/></g><g transform="translate(759.6 792.8)"><circle r="3.17" fill="none" stroke="#e0e0e0" stroke-width="2.22"/><rect x="-1.11" y="-5.60" width="2.22" height="2.11" fill="#e0e0e0" transform="rotate(0)"/><rect x="-1.11" y="-5.60" width="2.22" height="2.11" fill="#e0e0e0" transform="rotate(45)"/><rect x="-1.11" y="-5.60" width="2.22" height="2.11" fill="#e0e0e0" transform="rotate(90)"/><rect x="-1.11" y="-5.60" width="2.22" height="2.11" fill="#e0e0e0" transform="rotate(135)"/><rect x="-1.11" y="-5.60" width="2.22" height="2.11" fill="#e0e0e0" transform="rotate(180)"/><rect x="-1.11" y="-5.60" width="2.22" height="2.11" fill="#e0e0e0" transform="rotate(225)"/><rect x="-1.11" y="-5.60" width="2.22" height="2.11" fill="#e0e0e0" transform="rotate(270)"/><rect x="-1.11" y="-5.60" width="2.22" height="2.11" fill="#e0e0e0" transform="rotate(315)"/></g><path d="M590.7 734.0H600.7L595.7 739.4000000000001Z" fill="#ddd"/><path d="M690.2 735.6H769.5" stroke="#1c1c1c" stroke-width="1.2"/><path d="M737.2 787.3L739.5 790.3H734.9ZM737.2 799L739.5 796H734.9Z" fill="#eee"/><path d="M963 645.2L965.3 648.2H960.7ZM963 657L965.3 654H960.7Z" fill="#eee"/><path d="M955.5 678.9499999999999H962.5L959 682.85Z" fill="#eee"/><path d="M992.1 592.3H1001.6999999999999L996.9 597.3Z" fill="#ddd"/><path d="M992.2 714.0500000000001H1002.0L997.1 719.35Z" fill="#ddd"/><path d="M1105.6 594H1118.8M1057.5 715.8H1169.8" stroke="#1c1c1c" stroke-width="1.2"/><rect x="1124" y="589.3" width="20" height="9.4" rx="4.7" fill="#fcae1b"/><circle cx="1139.2" cy="594" r="4.1" fill="#808080"/><g transform="translate(1159.7 593.8)"><circle r="3.11" fill="none" stroke="#e0e0e0" stroke-width="2.18"/><rect x="-1.09" y="-5.50" width="2.18" height="2.08" fill="#e0e0e0" transform="rotate(0)"/><rect x="-1.09" y="-5.50" width="2.18" height="2.08" fill="#e0e0e0" transform="rotate(45)"/><rect x="-1.09" y="-5.50" width="2.18" height="2.08" fill="#e0e0e0" transform="rotate(90)"/><rect x="-1.09" y="-5.50" width="2.18" height="2.08" fill="#e0e0e0" transform="rotate(135)"/><rect x="-1.09" y="-5.50" width="2.18" height="2.08" fill="#e0e0e0" transform="rotate(180)"/><rect x="-1.09" y="-5.50" width="2.18" height="2.08" fill="#e0e0e0" transform="rotate(225)"/><rect x="-1.09" y="-5.50" width="2.18" height="2.08" fill="#e0e0e0" transform="rotate(270)"/><rect x="-1.09" y="-5.50" width="2.18" height="2.08" fill="#e0e0e0" transform="rotate(315)"/></g><path d="M1080.5 766.2L1082.8 769.2H1078.2ZM1080.5 777.8L1082.8 774.8H1078.2Z" fill="#eee"/><rect x="1196.1" y="557.8" width="7.6" height="7.6" fill="none" stroke="#fcae1b" stroke-width="2"/><rect x="1208.6" y="557.8" width="7.6" height="7.6" fill="none" stroke="#fcae1b" stroke-width="2"/><rect x="1196.1" y="570.5" width="7.6" height="7.6" fill="none" stroke="#fcae1b" stroke-width="2"/><rect x="1208.6" y="570.5" width="7.6" height="7.6" fill="none" stroke="#fcae1b" stroke-width="2"/><path d="M1194.6 596.4H1202.3V599.6L1198.5 602.4L1194.6 599.6Z" fill="#fcae1b"/><path d="M1198.5 600V620.7M1195.1 611.8H1218" stroke="#fcae1b" stroke-width="1.3"/><path d="M1202.7 608.8V614.8" stroke="#fcae1b" stroke-width="1.6"/><path d="M1206.2 604.8V618.8" stroke="#fcae1b" stroke-width="1.6"/><path d="M1210 607.8V615.8" stroke="#fcae1b" stroke-width="1.6"/><path d="M1213.8 606.8V616.8" stroke="#fcae1b" stroke-width="1.6"/><path d="M1197.8 648.2V665" stroke="#fcae1b" stroke-width="3.7" stroke-linecap="round"/><path d="M1206.1 658.8V665" stroke="#fcae1b" stroke-width="3.7" stroke-linecap="round"/><path d="M1214.1 654.8V665" stroke="#fcae1b" stroke-width="3.7" stroke-linecap="round"/></g></svg>
<div class="a ob" style="left:25px;top:25px;width:1202.4px;height:69px;"></div>
<div class="a ob" style="left:25px;top:98px;width:265px;height:440px;"></div>
<div class="a ob" style="left:294px;top:98px;width:882.4px;height:440px;"></div>
<div class="a ob" style="left:1179.8px;top:98px;width:47.6px;height:440px;"></div>
<div class="a ob" style="left:25px;top:542px;width:1202.4px;height:279px;"></div>
<div class="a badge" style="left:424.2px;top:192px">1</div>
<div class="a badge" style="left:1037px;top:1px">2</div>
<div class="a badge" style="left:1px;top:217px">3</div>
<div class="a badge" style="left:1201px;top:409.8px">4</div>
<div class="a badge" style="left:848px;top:795px">5</div>
</body></html>
